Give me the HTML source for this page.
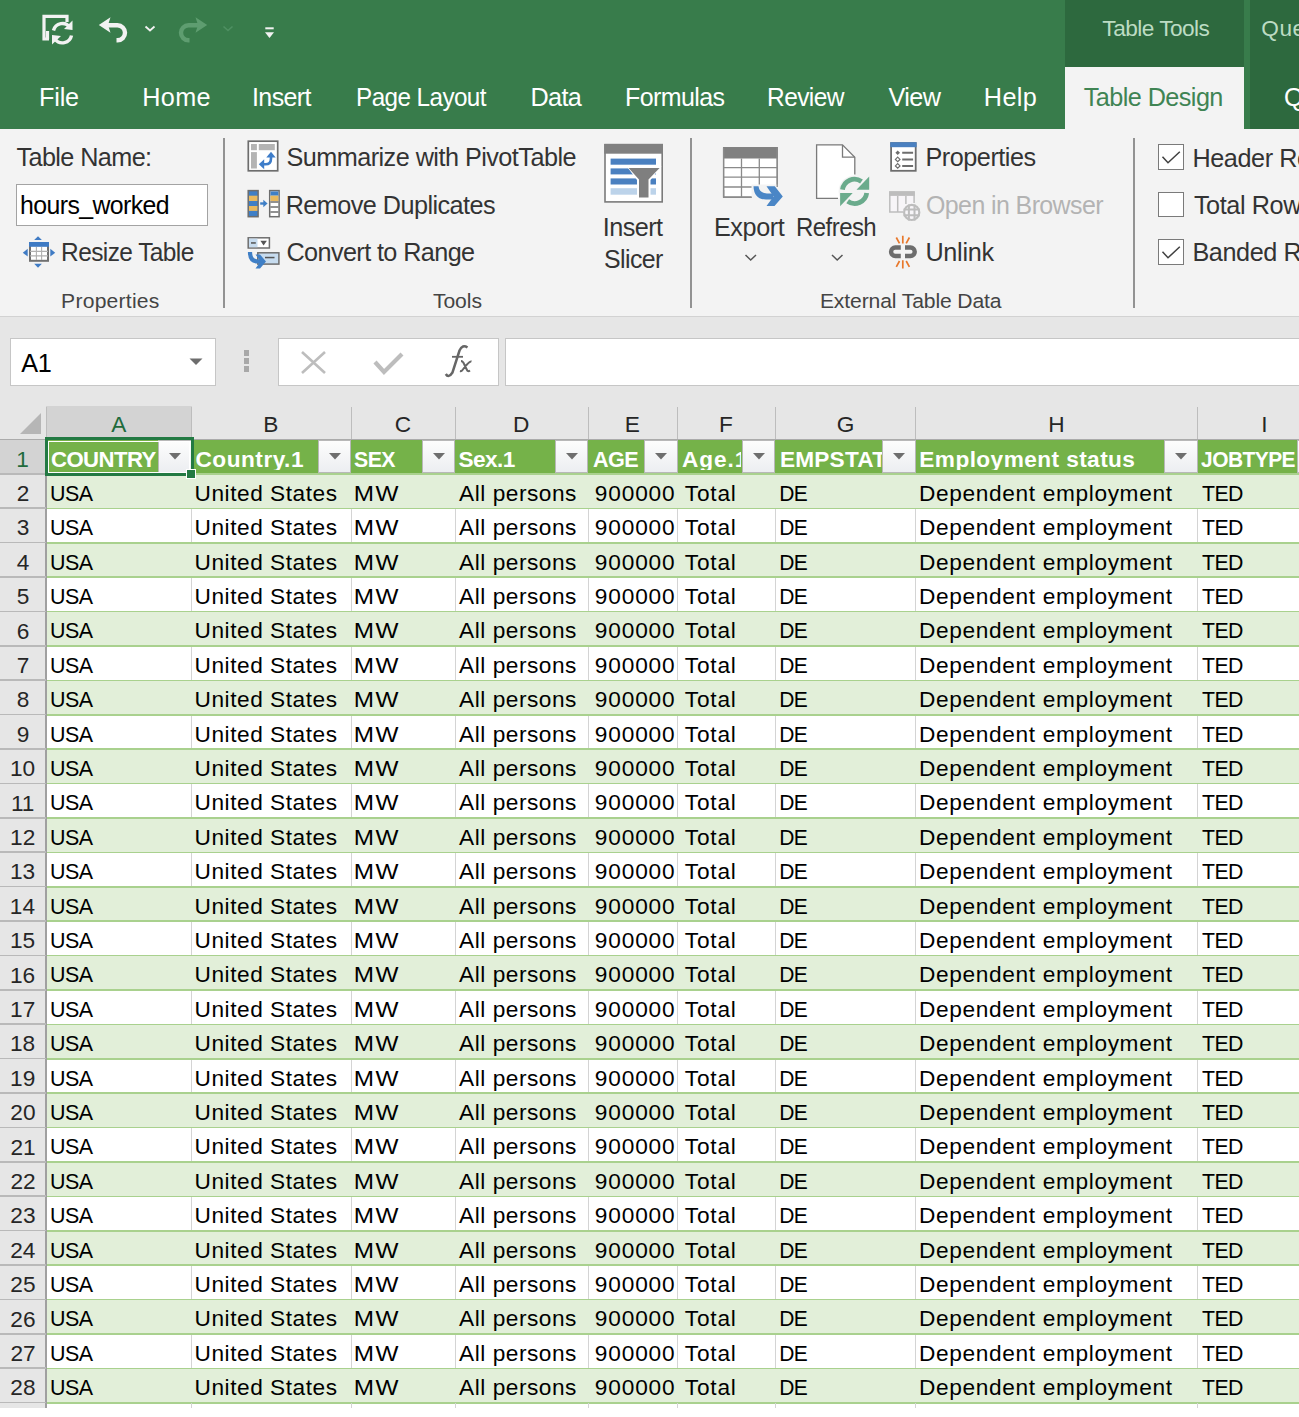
<!DOCTYPE html><html><head><meta charset='utf-8'><style>*{margin:0;padding:0;box-sizing:border-box}
html,body{width:1299px;height:1417px;overflow:hidden;background:#fff;font-family:"Liberation Sans", sans-serif;}
.a{position:absolute}
.t{position:absolute;white-space:nowrap;line-height:1}
</style></head><body>
<div class="a" style="left:0;top:0;width:1299px;height:129px;background:#387c4b"></div>
<div class="a" style="left:1065px;top:0;width:179px;height:67px;background:#2d693e"></div>
<div class="a" style="left:1065px;top:67px;width:179px;height:62px;background:#f3f3f3"></div>
<div class="a" style="left:1250px;top:0;width:49px;height:129px;background:#2d693e"></div>
<div class="t" style="left:39.08px;top:84.83px;font-size:25.23px;color:#ffffff;letter-spacing:-0.198px">File</div>
<div class="t" style="left:142.28px;top:84.83px;font-size:25.23px;color:#ffffff;letter-spacing:0.354px">Home</div>
<div class="t" style="left:252.33px;top:84.83px;font-size:25.23px;color:#ffffff;letter-spacing:-0.600px;transform:scaleX(0.9904);transform-origin:2.27px 0">Insert</div>
<div class="t" style="left:355.78px;top:84.83px;font-size:25.23px;color:#ffffff;letter-spacing:-0.600px;transform:scaleX(0.9616);transform-origin:2.02px 0">Page Layout</div>
<div class="t" style="left:530.38px;top:84.83px;font-size:25.23px;color:#ffffff;letter-spacing:-0.600px">Data</div>
<div class="t" style="left:625.28px;top:84.83px;font-size:25.23px;color:#ffffff;letter-spacing:-0.600px;transform:scaleX(0.9900);transform-origin:2.02px 0">Formulas</div>
<div class="t" style="left:767.28px;top:84.83px;font-size:25.23px;color:#ffffff;letter-spacing:-0.600px;transform:scaleX(0.9712);transform-origin:2.02px 0">Review</div>
<div class="t" style="left:888.55px;top:84.83px;font-size:25.23px;color:#ffffff;letter-spacing:-0.600px">View</div>
<div class="t" style="left:983.78px;top:84.83px;font-size:25.23px;color:#ffffff;letter-spacing:0.418px">Help</div>
<div class="t" style="left:1083.80px;top:84.53px;font-size:25.23px;color:#3f8453;letter-spacing:-0.565px">Table Design</div>
<div class="t" style="left:1102.35px;top:16.93px;font-size:22.66px;color:#bcdcc3;letter-spacing:-0.541px">Table Tools</div>
<div class="t" style="left:1261.17px;top:16.93px;font-size:22.66px;color:#bcdcc3;letter-spacing:0.600px">Que</div>
<div class="t" style="left:1284.04px;top:84.83px;font-size:25.23px;color:#ffffff;letter-spacing:0.000px">Q</div>
<div class="a" style="left:0;top:129px;width:1299px;height:188px;background:#f3f3f3"></div>
<div class="a" style="left:0;top:315.6px;width:1299px;height:1.6px;background:#d2d2d2"></div>
<div class="t" style="left:16.50px;top:145.23px;font-size:25.23px;color:#333333;letter-spacing:-0.600px">Table Name:</div>
<div class="a" style="left:16.3px;top:183.6px;width:192px;height:42px;background:#fff;border:1.5px solid #a3a3a3"></div>
<div class="t" style="left:20.03px;top:192.93px;font-size:25.23px;color:#000000;letter-spacing:-0.600px;transform:scaleX(0.9854);transform-origin:1.77px 0">hours_worked</div>
<div class="t" style="left:60.78px;top:240.43px;font-size:25.23px;color:#333333;letter-spacing:-0.600px;transform:scaleX(0.9703);transform-origin:2.02px 0">Resize Table</div>
<div class="t" style="left:61.11px;top:290.14px;font-size:21.12px;color:#444444;letter-spacing:0.225px">Properties</div>
<div class="a" style="left:223.25px;top:137.5px;width:1.5px;height:170.3px;background:#929292"></div>
<div class="a" style="left:690.25px;top:137.5px;width:1.5px;height:170.3px;background:#929292"></div>
<div class="a" style="left:1133.05px;top:137.5px;width:1.5px;height:170.3px;background:#929292"></div>
<div class="t" style="left:286.44px;top:145.23px;font-size:25.23px;color:#333333;letter-spacing:-0.529px">Summarize with PivotTable</div>
<div class="t" style="left:285.68px;top:192.93px;font-size:25.23px;color:#333333;letter-spacing:-0.545px">Remove Duplicates</div>
<div class="t" style="left:286.44px;top:240.43px;font-size:25.23px;color:#333333;letter-spacing:-0.600px">Convert to Range</div>
<div class="t" style="left:432.88px;top:290.14px;font-size:21.12px;color:#444444;letter-spacing:-0.038px">Tools</div>
<div class="t" style="left:602.73px;top:214.53px;font-size:25.23px;color:#333333;letter-spacing:-0.550px">Insert</div>
<div class="t" style="left:603.74px;top:247.13px;font-size:25.23px;color:#333333;letter-spacing:-0.600px;transform:scaleX(0.9870);transform-origin:1.26px 0">Slicer</div>
<div class="t" style="left:713.88px;top:214.53px;font-size:25.23px;color:#333333;letter-spacing:-0.389px">Export</div>
<div class="t" style="left:795.58px;top:214.53px;font-size:25.23px;color:#333333;letter-spacing:-0.600px;transform:scaleX(0.9511);transform-origin:2.02px 0">Refresh</div>
<div class="t" style="left:925.38px;top:145.23px;font-size:25.23px;color:#333333;letter-spacing:-0.458px">Properties</div>
<div class="t" style="left:926.14px;top:192.93px;font-size:25.23px;color:#b3b3b3;letter-spacing:-0.600px;transform:scaleX(0.9893);transform-origin:1.26px 0">Open in Browser</div>
<div class="t" style="left:925.38px;top:240.43px;font-size:25.23px;color:#333333;letter-spacing:-0.244px">Unlink</div>
<div class="t" style="left:819.91px;top:290.14px;font-size:21.12px;color:#444444;letter-spacing:-0.120px">External Table Data</div>
<div class="a" style="left:1157.5px;top:144.2px;width:26.2px;height:25.5px;background:#fff;border:1.4px solid #7a7a7a"></div>
<div class="a" style="left:1157.5px;top:191.7px;width:26.2px;height:25.5px;background:#fff;border:1.4px solid #7a7a7a"></div>
<div class="a" style="left:1157.5px;top:239.3px;width:26.2px;height:25.5px;background:#fff;border:1.4px solid #7a7a7a"></div>
<svg class="a" style="left:1157.5px;top:144.2px" width="27" height="26"><polyline points="4.5,12.7 10,18.8 21.8,7.8" fill="none" stroke="#404040" stroke-width="1.5"/></svg>
<svg class="a" style="left:1157.5px;top:239.3px" width="27" height="26"><polyline points="4.5,12.7 10,18.8 21.8,7.8" fill="none" stroke="#404040" stroke-width="1.5"/></svg>
<div class="t" style="left:1192.38px;top:145.73px;font-size:25.23px;color:#333333;letter-spacing:-0.400px">Header Ro</div>
<div class="t" style="left:1193.90px;top:192.83px;font-size:25.23px;color:#333333;letter-spacing:-0.400px">Total Row</div>
<div class="t" style="left:1192.38px;top:240.43px;font-size:25.23px;color:#333333;letter-spacing:-0.400px">Banded Ro</div>
<div class="a" style="left:0;top:317.2px;width:1299px;height:90px;background:#e6e6e6"></div>
<div class="a" style="left:10.4px;top:337.6px;width:205.5px;height:48.4px;background:#fff;border:1.2px solid #c6c6c6"></div>
<div class="t" style="left:21.20px;top:350.83px;font-size:25.23px;color:#000000;letter-spacing:-0.171px">A1</div>
<svg class="a" style="left:189px;top:358px" width="15" height="8"><polygon points="0.5,0.5 13.5,0.5 7,7" fill="#6d6d6d"/></svg>
<div class="a" style="left:243.8px;top:350px;width:5.5px;height:5.5px;background:#a8a8a8"></div>
<div class="a" style="left:243.8px;top:358px;width:5.5px;height:5.5px;background:#a8a8a8"></div>
<div class="a" style="left:243.8px;top:366px;width:5.5px;height:5.5px;background:#a8a8a8"></div>
<div class="a" style="left:277.6px;top:337.5px;width:221.7px;height:48.5px;background:#fff;border:1.2px solid #c6c6c6"></div>
<div class="a" style="left:504.9px;top:337.5px;width:800px;height:48.5px;background:#fff;border:1.2px solid #c6c6c6"></div>
<svg class="a" style="left:298px;top:349px" width="32" height="27"><path d="M4,3 L27,24 M27,3 L4,24" stroke="#bdbdbd" stroke-width="2.6" fill="none"/></svg>
<svg class="a" style="left:372px;top:350px" width="34" height="27"><polyline points="3,12 12,22 30,4" stroke="#bdbdbd" stroke-width="4.2" fill="none"/></svg>
<svg class="a" style="left:0;top:0" width="600" height="400"><path d="M445.8,374 Q448.5,378.5 452.5,372.5 L459.5,350.5 Q462.5,344 467.5,347.5" stroke="#666" stroke-width="2.5" fill="none"/><path d="M452,356.8 H463" stroke="#666" stroke-width="1.8"/><path d="M461,361 Q463,361 464.5,365 L467,370 Q468,372 470,370.5 M471.5,361.5 Q470,361 466.5,365 L462.5,370 Q461.5,371.5 460,371" stroke="#666" stroke-width="2" fill="none"/></svg>

<svg class="a" style="left:0;top:0" width="1299" height="400" viewBox="0 0 1299 400">
 <!-- QAT: autosave/refresh doc -->
 <g fill="none" stroke="#f2f2f2" stroke-width="3.2">
  <path d="M49,39 H44 V16.3 H67 V22"/>
  <path d="M47.5,31 V39"/>
 </g>
 <g fill="none" stroke="#f2f2f2" stroke-width="3.4">
  <path d="M53.5,30.5 A9.2,9.2 0 0 1 70,27.5"/>
  <path d="M71.5,35.5 A9.2,9.2 0 0 1 55,39"/>
 </g>
 <polygon points="72.5,20.5 72.5,30 64,29" fill="#f2f2f2"/>
 <polygon points="52,44.5 52,35 61,36" fill="#f2f2f2"/>
 <!-- undo -->
 <path d="M106,25.3 H117.5 A7.5,7.5 0 0 1 117.5,40.3 H116.5" fill="none" stroke="#f2f2f2" stroke-width="4.4"/>
 <polygon points="98.8,25 110.5,17.3 108,25 110.5,32.7" fill="#f2f2f2"/>
 <polyline points="145.5,26.5 150,30.5 154.5,26.5" fill="none" stroke="#f2f2f2" stroke-width="1.8"/>
 <!-- redo disabled -->
 <path d="M200,25.3 H188.5 A7.5,7.5 0 0 0 188.5,40.3 H189.5" fill="none" stroke="#5e9d70" stroke-width="4.4"/>
 <polygon points="207.2,25 195.5,17.3 198,25 195.5,32.7" fill="#5e9d70"/>
 <polyline points="223.5,26.5 228,30.5 232.5,26.5" fill="none" stroke="#4f9062" stroke-width="1.6"/>
 <!-- customize -->
 <rect x="265.3" y="27.3" width="8.4" height="2" fill="#f2f2f2"/>
 <polygon points="265,32.3 274,32.3 269.5,38" fill="#f2f2f2"/>

 <!-- Resize table icon -->
 <rect x="30" y="243" width="18" height="17.8" fill="#fff" stroke="#707070" stroke-width="2"/>
 <rect x="29" y="242" width="20" height="4.8" fill="#3f7bc4"/>
 <path d="M36.4,247 V260 M41.6,247 V260 M30,251.4 H48 M30,255.9 H48" stroke="#b0b0b0" stroke-width="1.1"/>
 <polygon points="34.2,240 41.9,240 38,236.3" fill="#3f7bc4"/>
 <polygon points="34.2,263.8 41.9,263.8 38,267.8" fill="#3f7bc4"/>
 <polygon points="27.7,248.8 27.7,256.6 22.8,252.7" fill="#3f7bc4"/>
 <polygon points="50.3,248.8 50.3,256.6 55.2,252.7" fill="#3f7bc4"/>

 <!-- Summarize with PivotTable icon -->
 <rect x="248.3" y="141.2" width="29.4" height="29.6" fill="#fff" stroke="#6d6d6d" stroke-width="1.7"/>
 <rect x="251" y="144" width="5.9" height="6.2" fill="#b4b4b4"/>
 <rect x="258.8" y="144" width="16" height="6.2" fill="#b4b4b4"/>
 <rect x="251" y="152.1" width="5.9" height="16.4" fill="#b4b4b4"/>
 <path d="M262,164.3 H265.5 Q271,164.3 271,158.5 V156" fill="none" stroke="#3d7cc9" stroke-width="2.6"/>
 <polygon points="258.8,164.3 264.2,159.3 264.2,169.3" fill="#3d7cc9"/>
 <polygon points="271,151.8 266.3,157.5 275.7,157.5" fill="#3d7cc9"/>

 <!-- Remove duplicates icon -->
 <rect x="248.2" y="190.6" width="9.9" height="26.1" fill="#3f7fc6" stroke="#6d6d6d" stroke-width="1.5"/>
 <rect x="249" y="195.7" width="8.4" height="5.3" fill="#e9b95e"/>
 <rect x="249" y="206" width="8.4" height="4.9" fill="#e9b95e"/>
 <rect x="269.7" y="190.6" width="9.4" height="26.1" fill="#fff" stroke="#6d6d6d" stroke-width="1.5"/>
 <rect x="270.5" y="191.4" width="7.8" height="4.3" fill="#3f7fc6"/>
 <rect x="270.5" y="195.7" width="7.8" height="5.3" fill="#e9b95e"/>
 <path d="M270.4,202 H278.4 M270.4,207 H278.4 M270.4,212 H278.4" stroke="#6d6d6d" stroke-width="1.7"/>
 <rect x="260.2" y="202.3" width="4" height="2.4" fill="#3f7fc6"/>
 <polygon points="263.3,199.8 267.6,203.5 263.3,207.2" fill="#3f7fc6"/>

 <!-- Convert to range icon -->
 <rect x="248.2" y="237.8" width="21.2" height="10.2" fill="#fff" stroke="#6d6d6d" stroke-width="1.5"/>
 <rect x="249" y="238.6" width="8.5" height="8.6" fill="#c7dcef"/>
 <rect x="251" y="242.2" width="4.8" height="1.5" fill="#555"/>
 <polygon points="260.4,240.8 266.9,240.8 263.6,245.4" fill="#555"/>
 <rect x="257.8" y="252.8" width="21.1" height="11.3" fill="#c7dcef" stroke="#6d6d6d" stroke-width="1.5"/>
 <rect x="265" y="256.8" width="9.5" height="1.5" fill="#555"/>
 <path d="M250,252 Q250,261.5 258,261.5 H261" fill="none" stroke="#3f7fc6" stroke-width="4.2"/>
 <polygon points="255.5,254.5 260,254.5 266,261.5 260,268.5 255.5,268.5 260.5,261.5" fill="#3f7fc6"/>

 <!-- Insert slicer icon -->
 <rect x="605" y="144.7" width="57.2" height="57.2" fill="#fff" stroke="#7a7a7a" stroke-width="1.6"/>
 <rect x="604.2" y="143.9" width="58.8" height="9.8" fill="#808080"/>
 <rect x="610.6" y="158.6" width="45.4" height="6.1" fill="#4a80c0"/>
 <rect x="610.6" y="168.4" width="45.4" height="6" fill="#4a80c0"/>
 <rect x="610.6" y="178.4" width="45.4" height="6.1" fill="#4a80c0"/>
 <rect x="610.6" y="188.2" width="45.4" height="6.5" fill="#bcd3ea"/>
 <polygon points="626.5,166 661.5,166 650.5,180 650.5,199.5 637,199.5 637,180" fill="#fff"/>
 <polygon points="628.6,167.9 659.6,167.9 648.5,179.5 648.5,197.5 639,197.5 639,179.5" fill="#7f7f7f"/>

 <!-- Export icon -->
 <rect x="723.6" y="147.7" width="53.6" height="49.3" fill="#fff" stroke="#8a8a8a" stroke-width="1.3"/>
 <rect x="723" y="147.1" width="54.8" height="11.4" fill="#808080"/>
 <path d="M741.5,158.5 V197 M759.3,158.5 V197 M723.5,167.7 H777.3 M723.5,177.2 H777.3 M723.5,187 H777.3" stroke="#8a8a8a" stroke-width="1.3"/>
 <polygon points="751.5,184.5 780,184.5 785,198 776.5,208 751.5,208" fill="#f3f3f3"/>
 <path d="M751.5,197.4 H724 M723.6,197 V190" stroke="#8a8a8a" stroke-width="1.3"/>
 <path d="M723.6,147.7 V197.4 H751.5" fill="none" stroke="#8a8a8a" stroke-width="1.3"/>
 <path d="M777.2,147.7 V187" fill="none" stroke="#8a8a8a" stroke-width="1.3"/>
 <polygon points="753.5,186.3 758.5,186.3 Q759.5,193.4 767,193.4 L773,193.4 L773,199.5 L766,199.5 Q754,199.5 753.5,186.3 Z" fill="#4a86c6"/>
 <path d="M753.5,186.3 L758.5,186.3 Q759.5,193.4 767,193.4 L773,193.4 L773,199.5 L766,199.5 Q754,199.5 753.5,186.3 Z" fill="#4a86c6"/>
 <polygon points="766.5,186.3 774.8,186.3 782.8,196.5 774.5,205.9 766.5,205.9 773.5,196.5" fill="#4a86c6"/>

 <!-- Refresh icon -->
 <polygon points="816.6,144.9 842.5,144.9 854.8,157.2 854.8,198.3 816.6,198.3" fill="#fff"/>
 <path d="M838,198.3 H816.6 V144.9 H842.5 L854.8,157.2 V174.5" fill="none" stroke="#7a7a7a" stroke-width="1.3"/>
 <path d="M842.5,144.9 V157.2 H854.8" fill="none" stroke="#7a7a7a" stroke-width="1.3"/>
 <rect x="838" y="175" width="40" height="40" fill="#f3f3f3"/>
 <polygon points="838,175 854.8,175 854.8,198.3 838,198.3" fill="#fff"/>
 <circle cx="854.6" cy="191.4" r="16" fill="#f3f3f3"/>
 <g fill="none" stroke="#6aab8c" stroke-width="4.8">
  <path d="M842.5,189.7 A12.1,12.1 0 0 1 861.5,181.5"/>
  <path d="M866.7,193 A12.1,12.1 0 0 1 847.7,201.3"/>
 </g>
 <polygon points="869.2,176.5 869.2,189.7 856.5,189.7" fill="#6aab8c"/>
 <polygon points="840.1,206.3 840.1,193 852.7,193" fill="#6aab8c"/>
 <polyline points="745.5,255 750.7,260 756,255" fill="none" stroke="#555" stroke-width="1.5"/>
 <polyline points="832,255 837.2,260 842.5,255" fill="none" stroke="#555" stroke-width="1.5"/>

 <!-- Properties icon -->
 <rect x="891.1" y="143.1" width="24.6" height="27.7" fill="#fff" stroke="#6d6d6d" stroke-width="1.8"/>
 <rect x="890.2" y="142.2" width="26.4" height="5" fill="#4a80c0"/>
 <polygon points="897.7,150.5 900,152.8 897.7,155.1 895.4,152.8" fill="#6d6d6d"/>
 <polygon points="897.7,157.1 900,159.4 897.7,161.7 895.4,159.4" fill="none" stroke="#6d6d6d" stroke-width="1.2"/>
 <polygon points="897.7,163.6 900,165.9 897.7,168.2 895.4,165.9" fill="none" stroke="#6d6d6d" stroke-width="1.2"/>
 <path d="M902.2,152.8 H913.1 M902.2,159.4 H913.1 M902.2,165.9 H913.1" stroke="#6d6d6d" stroke-width="2"/>

 <!-- Open in browser (disabled) -->
 <path d="M903,212 H889.8 V192.1 H914.1 V203" fill="#f7f5f8" stroke="#bdbdbd" stroke-width="1.5"/>
 <rect x="889.1" y="191.4" width="25.7" height="4.5" fill="#bdbdbd"/>
 <path d="M897.7,195.9 V212 M905.9,195.9 V204" stroke="#bdbdbd" stroke-width="1.5"/>
 <circle cx="911.7" cy="212.4" r="7.6" fill="#f7f5f8" stroke="#bdbdbd" stroke-width="2.2"/>
 <path d="M908.9,204.5 V220.5 M914.5,204.5 V220.5 M903.6,209.6 H919.8 M903.6,215.2 H919.8" stroke="#bdbdbd" stroke-width="2"/>

 <!-- Unlink -->
 <path d="M900.8,247.5 H895.3 A4.25,4.25 0 0 0 895.3,256 H900.8" fill="none" stroke="#6d6d6d" stroke-width="4.4"/>
 <path d="M905,247.5 H910.5 A4.25,4.25 0 0 1 910.5,256 H905" fill="none" stroke="#6d6d6d" stroke-width="4.4"/>
 <path d="M902.8,235.8 V243.6 M896.3,237.5 L899.5,243.3 M909.4,237.5 L906.2,243.3 M902.8,260.3 V268.6 M896.3,266.8 L899.5,261 M909.4,266.8 L906.2,261" stroke="#e8782b" stroke-width="1.7"/>
</svg>

<div class="a" style="left:0;top:406px;width:1299px;height:33.60000000000002px;background:#e6e6e6"></div>
<div class="a" style="left:46px;top:406px;width:145.5px;height:33.60000000000002px;background:#d3d3d3"></div>
<svg class="a" style="left:0;top:406px" width="46" height="34"><polygon points="41,7 41,28 20,28" fill="#b6b6b6"/></svg>
<div class="a" style="left:45.5px;top:407px;width:1px;height:32.60000000000002px;background:#bdbdbd"></div>
<div class="a" style="left:191.0px;top:407px;width:1px;height:32.60000000000002px;background:#bdbdbd"></div>
<div class="a" style="left:350.5px;top:407px;width:1px;height:32.60000000000002px;background:#bdbdbd"></div>
<div class="a" style="left:454.5px;top:407px;width:1px;height:32.60000000000002px;background:#bdbdbd"></div>
<div class="a" style="left:587.5px;top:407px;width:1px;height:32.60000000000002px;background:#bdbdbd"></div>
<div class="a" style="left:677.0px;top:407px;width:1px;height:32.60000000000002px;background:#bdbdbd"></div>
<div class="a" style="left:774.5px;top:407px;width:1px;height:32.60000000000002px;background:#bdbdbd"></div>
<div class="a" style="left:915.0px;top:407px;width:1px;height:32.60000000000002px;background:#bdbdbd"></div>
<div class="a" style="left:1197.0px;top:407px;width:1px;height:32.60000000000002px;background:#bdbdbd"></div>
<div class="t" style="left:111.27px;top:412.93px;font-size:22.66px;color:#1f6b3c;letter-spacing:0.000px">A</div>
<div class="t" style="left:263.32px;top:412.93px;font-size:22.66px;color:#262626;letter-spacing:0.000px">B</div>
<div class="t" style="left:394.73px;top:412.93px;font-size:22.66px;color:#262626;letter-spacing:0.000px">C</div>
<div class="t" style="left:512.89px;top:412.93px;font-size:22.66px;color:#262626;letter-spacing:0.000px">D</div>
<div class="t" style="left:624.71px;top:412.93px;font-size:22.66px;color:#262626;letter-spacing:0.000px">E</div>
<div class="t" style="left:718.89px;top:412.93px;font-size:22.66px;color:#262626;letter-spacing:0.000px">F</div>
<div class="t" style="left:836.75px;top:412.93px;font-size:22.66px;color:#262626;letter-spacing:0.000px">G</div>
<div class="t" style="left:1048.34px;top:412.93px;font-size:22.66px;color:#262626;letter-spacing:0.000px">H</div>
<div class="t" style="left:1261.33px;top:412.93px;font-size:22.66px;color:#262626;letter-spacing:0.000px">I</div>
<div class="a" style="left:0;top:438.6px;width:1299px;height:1px;background:#ababab"></div>
<div class="a" style="left:0;top:439.6px;width:46px;height:968.9px;background:#e6e6e6"></div>
<div class="a" style="left:0;top:439.6px;width:46px;height:34.4px;background:#d3d3d3"></div>
<div class="a" style="left:45.3px;top:439.6px;width:1.4px;height:968.9px;background:#a0a0a0"></div>
<div class="a" style="left:0;top:473.0px;width:46px;height:1.5px;background:#b9b9b9"></div>
<div class="t" style="left:16.32px;top:447.63px;font-size:22.66px;color:#1f6b3c;letter-spacing:0.000px">1</div>
<div class="a" style="left:0;top:507.4px;width:46px;height:1.5px;background:#b9b9b9"></div>
<div class="t" style="left:16.66px;top:482.03px;font-size:22.66px;color:#262626;letter-spacing:0.000px">2</div>
<div class="a" style="left:0;top:541.8000000000001px;width:46px;height:1.5px;background:#b9b9b9"></div>
<div class="t" style="left:16.77px;top:516.43px;font-size:22.66px;color:#262626;letter-spacing:0.000px">3</div>
<div class="a" style="left:0;top:576.1999999999999px;width:46px;height:1.5px;background:#b9b9b9"></div>
<div class="t" style="left:16.77px;top:550.83px;font-size:22.66px;color:#262626;letter-spacing:0.000px">4</div>
<div class="a" style="left:0;top:610.6px;width:46px;height:1.5px;background:#b9b9b9"></div>
<div class="t" style="left:16.66px;top:585.23px;font-size:22.66px;color:#262626;letter-spacing:0.000px">5</div>
<div class="a" style="left:0;top:645.0px;width:46px;height:1.5px;background:#b9b9b9"></div>
<div class="t" style="left:16.66px;top:619.63px;font-size:22.66px;color:#262626;letter-spacing:0.000px">6</div>
<div class="a" style="left:0;top:679.4px;width:46px;height:1.5px;background:#b9b9b9"></div>
<div class="t" style="left:16.66px;top:654.03px;font-size:22.66px;color:#262626;letter-spacing:0.000px">7</div>
<div class="a" style="left:0;top:713.8px;width:46px;height:1.5px;background:#b9b9b9"></div>
<div class="t" style="left:16.77px;top:688.43px;font-size:22.66px;color:#262626;letter-spacing:0.000px">8</div>
<div class="a" style="left:0;top:748.1999999999999px;width:46px;height:1.5px;background:#b9b9b9"></div>
<div class="t" style="left:16.66px;top:722.83px;font-size:22.66px;color:#262626;letter-spacing:0.000px">9</div>
<div class="a" style="left:0;top:782.6px;width:46px;height:1.5px;background:#b9b9b9"></div>
<div class="t" style="left:9.97px;top:757.23px;font-size:22.66px;color:#262626;letter-spacing:0.000px">10</div>
<div class="a" style="left:0;top:817.0px;width:46px;height:1.5px;background:#b9b9b9"></div>
<div class="t" style="left:10.88px;top:791.63px;font-size:22.66px;color:#262626;letter-spacing:0.000px">11</div>
<div class="a" style="left:0;top:851.4px;width:46px;height:1.5px;background:#b9b9b9"></div>
<div class="t" style="left:10.08px;top:826.03px;font-size:22.66px;color:#262626;letter-spacing:0.000px">12</div>
<div class="a" style="left:0;top:885.8px;width:46px;height:1.5px;background:#b9b9b9"></div>
<div class="t" style="left:9.97px;top:860.43px;font-size:22.66px;color:#262626;letter-spacing:0.000px">13</div>
<div class="a" style="left:0;top:920.1999999999999px;width:46px;height:1.5px;background:#b9b9b9"></div>
<div class="t" style="left:9.86px;top:894.83px;font-size:22.66px;color:#262626;letter-spacing:0.000px">14</div>
<div class="a" style="left:0;top:954.6px;width:46px;height:1.5px;background:#b9b9b9"></div>
<div class="t" style="left:9.97px;top:929.23px;font-size:22.66px;color:#262626;letter-spacing:0.000px">15</div>
<div class="a" style="left:0;top:989.0px;width:46px;height:1.5px;background:#b9b9b9"></div>
<div class="t" style="left:9.97px;top:963.63px;font-size:22.66px;color:#262626;letter-spacing:0.000px">16</div>
<div class="a" style="left:0;top:1023.4000000000001px;width:46px;height:1.5px;background:#b9b9b9"></div>
<div class="t" style="left:10.08px;top:998.03px;font-size:22.66px;color:#262626;letter-spacing:0.000px">17</div>
<div class="a" style="left:0;top:1057.8000000000002px;width:46px;height:1.5px;background:#b9b9b9"></div>
<div class="t" style="left:9.97px;top:1032.43px;font-size:22.66px;color:#262626;letter-spacing:0.000px">18</div>
<div class="a" style="left:0;top:1092.2px;width:46px;height:1.5px;background:#b9b9b9"></div>
<div class="t" style="left:10.08px;top:1066.83px;font-size:22.66px;color:#262626;letter-spacing:0.000px">19</div>
<div class="a" style="left:0;top:1126.6000000000001px;width:46px;height:1.5px;background:#b9b9b9"></div>
<div class="t" style="left:10.31px;top:1101.23px;font-size:22.66px;color:#262626;letter-spacing:0.000px">20</div>
<div class="a" style="left:0;top:1161.0px;width:46px;height:1.5px;background:#b9b9b9"></div>
<div class="t" style="left:10.42px;top:1135.63px;font-size:22.66px;color:#262626;letter-spacing:0.000px">21</div>
<div class="a" style="left:0;top:1195.4px;width:46px;height:1.5px;background:#b9b9b9"></div>
<div class="t" style="left:10.42px;top:1170.03px;font-size:22.66px;color:#262626;letter-spacing:0.000px">22</div>
<div class="a" style="left:0;top:1229.8000000000002px;width:46px;height:1.5px;background:#b9b9b9"></div>
<div class="t" style="left:10.31px;top:1204.43px;font-size:22.66px;color:#262626;letter-spacing:0.000px">23</div>
<div class="a" style="left:0;top:1264.2px;width:46px;height:1.5px;background:#b9b9b9"></div>
<div class="t" style="left:10.20px;top:1238.83px;font-size:22.66px;color:#262626;letter-spacing:0.000px">24</div>
<div class="a" style="left:0;top:1298.6px;width:46px;height:1.5px;background:#b9b9b9"></div>
<div class="t" style="left:10.31px;top:1273.23px;font-size:22.66px;color:#262626;letter-spacing:0.000px">25</div>
<div class="a" style="left:0;top:1333.0px;width:46px;height:1.5px;background:#b9b9b9"></div>
<div class="t" style="left:10.31px;top:1307.63px;font-size:22.66px;color:#262626;letter-spacing:0.000px">26</div>
<div class="a" style="left:0;top:1367.4px;width:46px;height:1.5px;background:#b9b9b9"></div>
<div class="t" style="left:10.42px;top:1342.03px;font-size:22.66px;color:#262626;letter-spacing:0.000px">27</div>
<div class="a" style="left:0;top:1401.8000000000002px;width:46px;height:1.5px;background:#b9b9b9"></div>
<div class="t" style="left:10.31px;top:1376.43px;font-size:22.66px;color:#262626;letter-spacing:0.000px">28</div>
<div class="a" style="left:46.5px;top:439.6px;width:1252.5px;height:34.4px;background:#75b249"></div>
<div class="a" style="left:46.5px;top:474.0px;width:1252.5px;height:34.4px;background:#e2efd9"></div>
<div class="a" style="left:46.5px;top:473.25px;width:1252.5px;height:1.5px;background:#a9d18e"></div>
<div class="a" style="left:46.5px;top:508.40000000000003px;width:1252.5px;height:34.4px;background:#ffffff"></div>
<div class="a" style="left:191.0px;top:508.40000000000003px;width:1px;height:34.4px;background:#d4d4d4"></div>
<div class="a" style="left:350.5px;top:508.40000000000003px;width:1px;height:34.4px;background:#d4d4d4"></div>
<div class="a" style="left:454.5px;top:508.40000000000003px;width:1px;height:34.4px;background:#d4d4d4"></div>
<div class="a" style="left:587.5px;top:508.40000000000003px;width:1px;height:34.4px;background:#d4d4d4"></div>
<div class="a" style="left:677.0px;top:508.40000000000003px;width:1px;height:34.4px;background:#d4d4d4"></div>
<div class="a" style="left:774.5px;top:508.40000000000003px;width:1px;height:34.4px;background:#d4d4d4"></div>
<div class="a" style="left:915.0px;top:508.40000000000003px;width:1px;height:34.4px;background:#d4d4d4"></div>
<div class="a" style="left:1197.0px;top:508.40000000000003px;width:1px;height:34.4px;background:#d4d4d4"></div>
<div class="a" style="left:46.5px;top:507.65000000000003px;width:1252.5px;height:1.5px;background:#a9d18e"></div>
<div class="a" style="left:46.5px;top:542.8px;width:1252.5px;height:34.4px;background:#e2efd9"></div>
<div class="a" style="left:46.5px;top:542.05px;width:1252.5px;height:1.5px;background:#a9d18e"></div>
<div class="a" style="left:46.5px;top:577.2px;width:1252.5px;height:34.4px;background:#ffffff"></div>
<div class="a" style="left:191.0px;top:577.2px;width:1px;height:34.4px;background:#d4d4d4"></div>
<div class="a" style="left:350.5px;top:577.2px;width:1px;height:34.4px;background:#d4d4d4"></div>
<div class="a" style="left:454.5px;top:577.2px;width:1px;height:34.4px;background:#d4d4d4"></div>
<div class="a" style="left:587.5px;top:577.2px;width:1px;height:34.4px;background:#d4d4d4"></div>
<div class="a" style="left:677.0px;top:577.2px;width:1px;height:34.4px;background:#d4d4d4"></div>
<div class="a" style="left:774.5px;top:577.2px;width:1px;height:34.4px;background:#d4d4d4"></div>
<div class="a" style="left:915.0px;top:577.2px;width:1px;height:34.4px;background:#d4d4d4"></div>
<div class="a" style="left:1197.0px;top:577.2px;width:1px;height:34.4px;background:#d4d4d4"></div>
<div class="a" style="left:46.5px;top:576.45px;width:1252.5px;height:1.5px;background:#a9d18e"></div>
<div class="a" style="left:46.5px;top:611.6px;width:1252.5px;height:34.4px;background:#e2efd9"></div>
<div class="a" style="left:46.5px;top:610.85px;width:1252.5px;height:1.5px;background:#a9d18e"></div>
<div class="a" style="left:46.5px;top:646.0px;width:1252.5px;height:34.4px;background:#ffffff"></div>
<div class="a" style="left:191.0px;top:646.0px;width:1px;height:34.4px;background:#d4d4d4"></div>
<div class="a" style="left:350.5px;top:646.0px;width:1px;height:34.4px;background:#d4d4d4"></div>
<div class="a" style="left:454.5px;top:646.0px;width:1px;height:34.4px;background:#d4d4d4"></div>
<div class="a" style="left:587.5px;top:646.0px;width:1px;height:34.4px;background:#d4d4d4"></div>
<div class="a" style="left:677.0px;top:646.0px;width:1px;height:34.4px;background:#d4d4d4"></div>
<div class="a" style="left:774.5px;top:646.0px;width:1px;height:34.4px;background:#d4d4d4"></div>
<div class="a" style="left:915.0px;top:646.0px;width:1px;height:34.4px;background:#d4d4d4"></div>
<div class="a" style="left:1197.0px;top:646.0px;width:1px;height:34.4px;background:#d4d4d4"></div>
<div class="a" style="left:46.5px;top:645.25px;width:1252.5px;height:1.5px;background:#a9d18e"></div>
<div class="a" style="left:46.5px;top:680.4px;width:1252.5px;height:34.4px;background:#e2efd9"></div>
<div class="a" style="left:46.5px;top:679.65px;width:1252.5px;height:1.5px;background:#a9d18e"></div>
<div class="a" style="left:46.5px;top:714.8px;width:1252.5px;height:34.4px;background:#ffffff"></div>
<div class="a" style="left:191.0px;top:714.8px;width:1px;height:34.4px;background:#d4d4d4"></div>
<div class="a" style="left:350.5px;top:714.8px;width:1px;height:34.4px;background:#d4d4d4"></div>
<div class="a" style="left:454.5px;top:714.8px;width:1px;height:34.4px;background:#d4d4d4"></div>
<div class="a" style="left:587.5px;top:714.8px;width:1px;height:34.4px;background:#d4d4d4"></div>
<div class="a" style="left:677.0px;top:714.8px;width:1px;height:34.4px;background:#d4d4d4"></div>
<div class="a" style="left:774.5px;top:714.8px;width:1px;height:34.4px;background:#d4d4d4"></div>
<div class="a" style="left:915.0px;top:714.8px;width:1px;height:34.4px;background:#d4d4d4"></div>
<div class="a" style="left:1197.0px;top:714.8px;width:1px;height:34.4px;background:#d4d4d4"></div>
<div class="a" style="left:46.5px;top:714.05px;width:1252.5px;height:1.5px;background:#a9d18e"></div>
<div class="a" style="left:46.5px;top:749.2px;width:1252.5px;height:34.4px;background:#e2efd9"></div>
<div class="a" style="left:46.5px;top:748.45px;width:1252.5px;height:1.5px;background:#a9d18e"></div>
<div class="a" style="left:46.5px;top:783.6px;width:1252.5px;height:34.4px;background:#ffffff"></div>
<div class="a" style="left:191.0px;top:783.6px;width:1px;height:34.4px;background:#d4d4d4"></div>
<div class="a" style="left:350.5px;top:783.6px;width:1px;height:34.4px;background:#d4d4d4"></div>
<div class="a" style="left:454.5px;top:783.6px;width:1px;height:34.4px;background:#d4d4d4"></div>
<div class="a" style="left:587.5px;top:783.6px;width:1px;height:34.4px;background:#d4d4d4"></div>
<div class="a" style="left:677.0px;top:783.6px;width:1px;height:34.4px;background:#d4d4d4"></div>
<div class="a" style="left:774.5px;top:783.6px;width:1px;height:34.4px;background:#d4d4d4"></div>
<div class="a" style="left:915.0px;top:783.6px;width:1px;height:34.4px;background:#d4d4d4"></div>
<div class="a" style="left:1197.0px;top:783.6px;width:1px;height:34.4px;background:#d4d4d4"></div>
<div class="a" style="left:46.5px;top:782.85px;width:1252.5px;height:1.5px;background:#a9d18e"></div>
<div class="a" style="left:46.5px;top:818.0px;width:1252.5px;height:34.4px;background:#e2efd9"></div>
<div class="a" style="left:46.5px;top:817.25px;width:1252.5px;height:1.5px;background:#a9d18e"></div>
<div class="a" style="left:46.5px;top:852.4px;width:1252.5px;height:34.4px;background:#ffffff"></div>
<div class="a" style="left:191.0px;top:852.4px;width:1px;height:34.4px;background:#d4d4d4"></div>
<div class="a" style="left:350.5px;top:852.4px;width:1px;height:34.4px;background:#d4d4d4"></div>
<div class="a" style="left:454.5px;top:852.4px;width:1px;height:34.4px;background:#d4d4d4"></div>
<div class="a" style="left:587.5px;top:852.4px;width:1px;height:34.4px;background:#d4d4d4"></div>
<div class="a" style="left:677.0px;top:852.4px;width:1px;height:34.4px;background:#d4d4d4"></div>
<div class="a" style="left:774.5px;top:852.4px;width:1px;height:34.4px;background:#d4d4d4"></div>
<div class="a" style="left:915.0px;top:852.4px;width:1px;height:34.4px;background:#d4d4d4"></div>
<div class="a" style="left:1197.0px;top:852.4px;width:1px;height:34.4px;background:#d4d4d4"></div>
<div class="a" style="left:46.5px;top:851.65px;width:1252.5px;height:1.5px;background:#a9d18e"></div>
<div class="a" style="left:46.5px;top:886.8px;width:1252.5px;height:34.4px;background:#e2efd9"></div>
<div class="a" style="left:46.5px;top:886.05px;width:1252.5px;height:1.5px;background:#a9d18e"></div>
<div class="a" style="left:46.5px;top:921.2px;width:1252.5px;height:34.4px;background:#ffffff"></div>
<div class="a" style="left:191.0px;top:921.2px;width:1px;height:34.4px;background:#d4d4d4"></div>
<div class="a" style="left:350.5px;top:921.2px;width:1px;height:34.4px;background:#d4d4d4"></div>
<div class="a" style="left:454.5px;top:921.2px;width:1px;height:34.4px;background:#d4d4d4"></div>
<div class="a" style="left:587.5px;top:921.2px;width:1px;height:34.4px;background:#d4d4d4"></div>
<div class="a" style="left:677.0px;top:921.2px;width:1px;height:34.4px;background:#d4d4d4"></div>
<div class="a" style="left:774.5px;top:921.2px;width:1px;height:34.4px;background:#d4d4d4"></div>
<div class="a" style="left:915.0px;top:921.2px;width:1px;height:34.4px;background:#d4d4d4"></div>
<div class="a" style="left:1197.0px;top:921.2px;width:1px;height:34.4px;background:#d4d4d4"></div>
<div class="a" style="left:46.5px;top:920.45px;width:1252.5px;height:1.5px;background:#a9d18e"></div>
<div class="a" style="left:46.5px;top:955.6px;width:1252.5px;height:34.4px;background:#e2efd9"></div>
<div class="a" style="left:46.5px;top:954.85px;width:1252.5px;height:1.5px;background:#a9d18e"></div>
<div class="a" style="left:46.5px;top:990.0px;width:1252.5px;height:34.4px;background:#ffffff"></div>
<div class="a" style="left:191.0px;top:990.0px;width:1px;height:34.4px;background:#d4d4d4"></div>
<div class="a" style="left:350.5px;top:990.0px;width:1px;height:34.4px;background:#d4d4d4"></div>
<div class="a" style="left:454.5px;top:990.0px;width:1px;height:34.4px;background:#d4d4d4"></div>
<div class="a" style="left:587.5px;top:990.0px;width:1px;height:34.4px;background:#d4d4d4"></div>
<div class="a" style="left:677.0px;top:990.0px;width:1px;height:34.4px;background:#d4d4d4"></div>
<div class="a" style="left:774.5px;top:990.0px;width:1px;height:34.4px;background:#d4d4d4"></div>
<div class="a" style="left:915.0px;top:990.0px;width:1px;height:34.4px;background:#d4d4d4"></div>
<div class="a" style="left:1197.0px;top:990.0px;width:1px;height:34.4px;background:#d4d4d4"></div>
<div class="a" style="left:46.5px;top:989.25px;width:1252.5px;height:1.5px;background:#a9d18e"></div>
<div class="a" style="left:46.5px;top:1024.4px;width:1252.5px;height:34.4px;background:#e2efd9"></div>
<div class="a" style="left:46.5px;top:1023.6500000000001px;width:1252.5px;height:1.5px;background:#a9d18e"></div>
<div class="a" style="left:46.5px;top:1058.8px;width:1252.5px;height:34.4px;background:#ffffff"></div>
<div class="a" style="left:191.0px;top:1058.8px;width:1px;height:34.4px;background:#d4d4d4"></div>
<div class="a" style="left:350.5px;top:1058.8px;width:1px;height:34.4px;background:#d4d4d4"></div>
<div class="a" style="left:454.5px;top:1058.8px;width:1px;height:34.4px;background:#d4d4d4"></div>
<div class="a" style="left:587.5px;top:1058.8px;width:1px;height:34.4px;background:#d4d4d4"></div>
<div class="a" style="left:677.0px;top:1058.8px;width:1px;height:34.4px;background:#d4d4d4"></div>
<div class="a" style="left:774.5px;top:1058.8px;width:1px;height:34.4px;background:#d4d4d4"></div>
<div class="a" style="left:915.0px;top:1058.8px;width:1px;height:34.4px;background:#d4d4d4"></div>
<div class="a" style="left:1197.0px;top:1058.8px;width:1px;height:34.4px;background:#d4d4d4"></div>
<div class="a" style="left:46.5px;top:1058.05px;width:1252.5px;height:1.5px;background:#a9d18e"></div>
<div class="a" style="left:46.5px;top:1093.2px;width:1252.5px;height:34.4px;background:#e2efd9"></div>
<div class="a" style="left:46.5px;top:1092.45px;width:1252.5px;height:1.5px;background:#a9d18e"></div>
<div class="a" style="left:46.5px;top:1127.6px;width:1252.5px;height:34.4px;background:#ffffff"></div>
<div class="a" style="left:191.0px;top:1127.6px;width:1px;height:34.4px;background:#d4d4d4"></div>
<div class="a" style="left:350.5px;top:1127.6px;width:1px;height:34.4px;background:#d4d4d4"></div>
<div class="a" style="left:454.5px;top:1127.6px;width:1px;height:34.4px;background:#d4d4d4"></div>
<div class="a" style="left:587.5px;top:1127.6px;width:1px;height:34.4px;background:#d4d4d4"></div>
<div class="a" style="left:677.0px;top:1127.6px;width:1px;height:34.4px;background:#d4d4d4"></div>
<div class="a" style="left:774.5px;top:1127.6px;width:1px;height:34.4px;background:#d4d4d4"></div>
<div class="a" style="left:915.0px;top:1127.6px;width:1px;height:34.4px;background:#d4d4d4"></div>
<div class="a" style="left:1197.0px;top:1127.6px;width:1px;height:34.4px;background:#d4d4d4"></div>
<div class="a" style="left:46.5px;top:1126.85px;width:1252.5px;height:1.5px;background:#a9d18e"></div>
<div class="a" style="left:46.5px;top:1162.0px;width:1252.5px;height:34.4px;background:#e2efd9"></div>
<div class="a" style="left:46.5px;top:1161.25px;width:1252.5px;height:1.5px;background:#a9d18e"></div>
<div class="a" style="left:46.5px;top:1196.4px;width:1252.5px;height:34.4px;background:#ffffff"></div>
<div class="a" style="left:191.0px;top:1196.4px;width:1px;height:34.4px;background:#d4d4d4"></div>
<div class="a" style="left:350.5px;top:1196.4px;width:1px;height:34.4px;background:#d4d4d4"></div>
<div class="a" style="left:454.5px;top:1196.4px;width:1px;height:34.4px;background:#d4d4d4"></div>
<div class="a" style="left:587.5px;top:1196.4px;width:1px;height:34.4px;background:#d4d4d4"></div>
<div class="a" style="left:677.0px;top:1196.4px;width:1px;height:34.4px;background:#d4d4d4"></div>
<div class="a" style="left:774.5px;top:1196.4px;width:1px;height:34.4px;background:#d4d4d4"></div>
<div class="a" style="left:915.0px;top:1196.4px;width:1px;height:34.4px;background:#d4d4d4"></div>
<div class="a" style="left:1197.0px;top:1196.4px;width:1px;height:34.4px;background:#d4d4d4"></div>
<div class="a" style="left:46.5px;top:1195.65px;width:1252.5px;height:1.5px;background:#a9d18e"></div>
<div class="a" style="left:46.5px;top:1230.8px;width:1252.5px;height:34.4px;background:#e2efd9"></div>
<div class="a" style="left:46.5px;top:1230.05px;width:1252.5px;height:1.5px;background:#a9d18e"></div>
<div class="a" style="left:46.5px;top:1265.1999999999998px;width:1252.5px;height:34.4px;background:#ffffff"></div>
<div class="a" style="left:191.0px;top:1265.1999999999998px;width:1px;height:34.4px;background:#d4d4d4"></div>
<div class="a" style="left:350.5px;top:1265.1999999999998px;width:1px;height:34.4px;background:#d4d4d4"></div>
<div class="a" style="left:454.5px;top:1265.1999999999998px;width:1px;height:34.4px;background:#d4d4d4"></div>
<div class="a" style="left:587.5px;top:1265.1999999999998px;width:1px;height:34.4px;background:#d4d4d4"></div>
<div class="a" style="left:677.0px;top:1265.1999999999998px;width:1px;height:34.4px;background:#d4d4d4"></div>
<div class="a" style="left:774.5px;top:1265.1999999999998px;width:1px;height:34.4px;background:#d4d4d4"></div>
<div class="a" style="left:915.0px;top:1265.1999999999998px;width:1px;height:34.4px;background:#d4d4d4"></div>
<div class="a" style="left:1197.0px;top:1265.1999999999998px;width:1px;height:34.4px;background:#d4d4d4"></div>
<div class="a" style="left:46.5px;top:1264.4499999999998px;width:1252.5px;height:1.5px;background:#a9d18e"></div>
<div class="a" style="left:46.5px;top:1299.6px;width:1252.5px;height:34.4px;background:#e2efd9"></div>
<div class="a" style="left:46.5px;top:1298.85px;width:1252.5px;height:1.5px;background:#a9d18e"></div>
<div class="a" style="left:46.5px;top:1334.0px;width:1252.5px;height:34.4px;background:#ffffff"></div>
<div class="a" style="left:191.0px;top:1334.0px;width:1px;height:34.4px;background:#d4d4d4"></div>
<div class="a" style="left:350.5px;top:1334.0px;width:1px;height:34.4px;background:#d4d4d4"></div>
<div class="a" style="left:454.5px;top:1334.0px;width:1px;height:34.4px;background:#d4d4d4"></div>
<div class="a" style="left:587.5px;top:1334.0px;width:1px;height:34.4px;background:#d4d4d4"></div>
<div class="a" style="left:677.0px;top:1334.0px;width:1px;height:34.4px;background:#d4d4d4"></div>
<div class="a" style="left:774.5px;top:1334.0px;width:1px;height:34.4px;background:#d4d4d4"></div>
<div class="a" style="left:915.0px;top:1334.0px;width:1px;height:34.4px;background:#d4d4d4"></div>
<div class="a" style="left:1197.0px;top:1334.0px;width:1px;height:34.4px;background:#d4d4d4"></div>
<div class="a" style="left:46.5px;top:1333.25px;width:1252.5px;height:1.5px;background:#a9d18e"></div>
<div class="a" style="left:46.5px;top:1368.4px;width:1252.5px;height:34.4px;background:#e2efd9"></div>
<div class="a" style="left:46.5px;top:1367.65px;width:1252.5px;height:1.5px;background:#a9d18e"></div>
<div class="a" style="left:46.5px;top:1402.05px;width:1252.5px;height:1.5px;background:#a9d18e"></div>
<div class="a" style="left:191.0px;top:1402.8px;width:1px;height:5.7000000000000455px;background:#d4d4d4"></div>
<div class="a" style="left:350.5px;top:1402.8px;width:1px;height:5.7000000000000455px;background:#d4d4d4"></div>
<div class="a" style="left:454.5px;top:1402.8px;width:1px;height:5.7000000000000455px;background:#d4d4d4"></div>
<div class="a" style="left:587.5px;top:1402.8px;width:1px;height:5.7000000000000455px;background:#d4d4d4"></div>
<div class="a" style="left:677.0px;top:1402.8px;width:1px;height:5.7000000000000455px;background:#d4d4d4"></div>
<div class="a" style="left:774.5px;top:1402.8px;width:1px;height:5.7000000000000455px;background:#d4d4d4"></div>
<div class="a" style="left:915.0px;top:1402.8px;width:1px;height:5.7000000000000455px;background:#d4d4d4"></div>
<div class="a" style="left:1197.0px;top:1402.8px;width:1px;height:5.7000000000000455px;background:#d4d4d4"></div>
<div class="a" style="left:0;top:1408.5px;width:1299px;height:10px;background:#fff"></div>
<div class="t" style="left:50.59px;top:447.53px;font-size:22.66px;color:#ffffff;letter-spacing:-0.600px;font-weight:700;width:107.41px;overflow:hidden"><span style="display:inline-block;transform:scaleX(0.9784);transform-origin:0.91px 0">COUNTRY</span></div>
<div class="t" style="left:195.49px;top:447.53px;font-size:22.66px;color:#ffffff;letter-spacing:0.494px;font-weight:700;width:122.01px;overflow:hidden">Country.1</div>
<div class="t" style="left:354.22px;top:447.53px;font-size:22.66px;color:#ffffff;letter-spacing:-0.600px;font-weight:700;width:67.28px;overflow:hidden"><span style="display:inline-block;transform:scaleX(0.9395);transform-origin:0.68px 0">SEX</span></div>
<div class="t" style="left:458.42px;top:447.53px;font-size:22.66px;color:#ffffff;letter-spacing:-0.552px;font-weight:700;width:96.08px;overflow:hidden">Sex.1</div>
<div class="t" style="left:592.72px;top:447.53px;font-size:22.66px;color:#ffffff;letter-spacing:-0.600px;font-weight:700;width:51.28px;overflow:hidden"><span style="display:inline-block;transform:scaleX(0.9529);transform-origin:0.68px 0">AGE</span></div>
<div class="t" style="left:682.12px;top:447.53px;font-size:22.66px;color:#ffffff;letter-spacing:0.900px;font-weight:700;width:59.38px;overflow:hidden">Age.1</div>
<div class="t" style="left:779.91px;top:447.53px;font-size:22.66px;color:#ffffff;letter-spacing:0.200px;font-weight:700;width:102.09px;overflow:hidden">EMPSTAT</div>
<div class="t" style="left:919.31px;top:447.53px;font-size:22.66px;color:#ffffff;letter-spacing:0.417px;font-weight:700;width:244.69px;overflow:hidden">Employment status</div>
<div class="t" style="left:1200.75px;top:447.53px;font-size:22.66px;color:#ffffff;letter-spacing:-0.600px;font-weight:700;width:96.25px;overflow:hidden"><span style="display:inline-block;transform:scaleX(0.9250);transform-origin:0.45px 0">JOBTYPE</span></div>
<div class="a" style="left:158.0px;top:440.1px;width:33.5px;height:32.5px;border:1px solid #b8b8b8;background:linear-gradient(#fdfdfd,#eceef1)"><svg style="position:absolute;left:10px;top:12px" width="13" height="7"><polygon points="0,0 12,0 6,6.5" fill="#6e6e6e"/></svg></div>
<div class="a" style="left:317.5px;top:440.1px;width:33.5px;height:32.5px;border:1px solid #b8b8b8;background:linear-gradient(#fdfdfd,#eceef1)"><svg style="position:absolute;left:10px;top:12px" width="13" height="7"><polygon points="0,0 12,0 6,6.5" fill="#6e6e6e"/></svg></div>
<div class="a" style="left:421.5px;top:440.1px;width:33.5px;height:32.5px;border:1px solid #b8b8b8;background:linear-gradient(#fdfdfd,#eceef1)"><svg style="position:absolute;left:10px;top:12px" width="13" height="7"><polygon points="0,0 12,0 6,6.5" fill="#6e6e6e"/></svg></div>
<div class="a" style="left:554.5px;top:440.1px;width:33.5px;height:32.5px;border:1px solid #b8b8b8;background:linear-gradient(#fdfdfd,#eceef1)"><svg style="position:absolute;left:10px;top:12px" width="13" height="7"><polygon points="0,0 12,0 6,6.5" fill="#6e6e6e"/></svg></div>
<div class="a" style="left:644.0px;top:440.1px;width:33.5px;height:32.5px;border:1px solid #b8b8b8;background:linear-gradient(#fdfdfd,#eceef1)"><svg style="position:absolute;left:10px;top:12px" width="13" height="7"><polygon points="0,0 12,0 6,6.5" fill="#6e6e6e"/></svg></div>
<div class="a" style="left:741.5px;top:440.1px;width:33.5px;height:32.5px;border:1px solid #b8b8b8;background:linear-gradient(#fdfdfd,#eceef1)"><svg style="position:absolute;left:10px;top:12px" width="13" height="7"><polygon points="0,0 12,0 6,6.5" fill="#6e6e6e"/></svg></div>
<div class="a" style="left:882.0px;top:440.1px;width:33.5px;height:32.5px;border:1px solid #b8b8b8;background:linear-gradient(#fdfdfd,#eceef1)"><svg style="position:absolute;left:10px;top:12px" width="13" height="7"><polygon points="0,0 12,0 6,6.5" fill="#6e6e6e"/></svg></div>
<div class="a" style="left:1164.0px;top:440.1px;width:33.5px;height:32.5px;border:1px solid #b8b8b8;background:linear-gradient(#fdfdfd,#eceef1)"><svg style="position:absolute;left:10px;top:12px" width="13" height="7"><polygon points="0,0 12,0 6,6.5" fill="#6e6e6e"/></svg></div>
<div class="a" style="left:1297.0px;top:440.1px;width:33.5px;height:32.5px;border:1px solid #b8b8b8;background:linear-gradient(#fdfdfd,#eceef1)"><svg style="position:absolute;left:10px;top:12px" width="13" height="7"><polygon points="0,0 12,0 6,6.5" fill="#6e6e6e"/></svg></div>
<div class="t" style="left:49.89px;top:481.83px;font-size:22.66px;color:#000000;letter-spacing:-0.600px;transform:scaleX(0.9461);transform-origin:1.81px 0">USA</div>
<div class="t" style="left:194.59px;top:481.83px;font-size:22.66px;color:#000000;letter-spacing:0.536px">United States</div>
<div class="t" style="left:353.89px;top:481.83px;font-size:22.66px;color:#000000;letter-spacing:1.200px;transform:scaleX(1.0735);transform-origin:1.81px 0">MW</div>
<div class="t" style="left:459.10px;top:481.83px;font-size:22.66px;color:#000000;letter-spacing:0.524px">All persons</div>
<div class="t" style="left:594.87px;top:481.83px;font-size:22.66px;color:#000000;letter-spacing:0.831px">900000</div>
<div class="t" style="left:684.85px;top:481.83px;font-size:22.66px;color:#000000;letter-spacing:0.800px">Total</div>
<div class="t" style="left:779.49px;top:481.83px;font-size:22.66px;color:#000000;letter-spacing:-0.600px;transform:scaleX(0.9262);transform-origin:1.81px 0">DE</div>
<div class="t" style="left:919.09px;top:481.83px;font-size:22.66px;color:#000000;letter-spacing:0.647px">Dependent employment</div>
<div class="t" style="left:1202.05px;top:481.83px;font-size:22.66px;color:#000000;letter-spacing:-0.600px;transform:scaleX(0.9381);transform-origin:0.45px 0">TED</div>
<div class="t" style="left:49.89px;top:516.23px;font-size:22.66px;color:#000000;letter-spacing:-0.600px;transform:scaleX(0.9461);transform-origin:1.81px 0">USA</div>
<div class="t" style="left:194.59px;top:516.23px;font-size:22.66px;color:#000000;letter-spacing:0.536px">United States</div>
<div class="t" style="left:353.89px;top:516.23px;font-size:22.66px;color:#000000;letter-spacing:1.200px;transform:scaleX(1.0735);transform-origin:1.81px 0">MW</div>
<div class="t" style="left:459.10px;top:516.23px;font-size:22.66px;color:#000000;letter-spacing:0.524px">All persons</div>
<div class="t" style="left:594.87px;top:516.23px;font-size:22.66px;color:#000000;letter-spacing:0.831px">900000</div>
<div class="t" style="left:684.85px;top:516.23px;font-size:22.66px;color:#000000;letter-spacing:0.800px">Total</div>
<div class="t" style="left:779.49px;top:516.23px;font-size:22.66px;color:#000000;letter-spacing:-0.600px;transform:scaleX(0.9262);transform-origin:1.81px 0">DE</div>
<div class="t" style="left:919.09px;top:516.23px;font-size:22.66px;color:#000000;letter-spacing:0.647px">Dependent employment</div>
<div class="t" style="left:1202.05px;top:516.23px;font-size:22.66px;color:#000000;letter-spacing:-0.600px;transform:scaleX(0.9381);transform-origin:0.45px 0">TED</div>
<div class="t" style="left:49.89px;top:550.63px;font-size:22.66px;color:#000000;letter-spacing:-0.600px;transform:scaleX(0.9461);transform-origin:1.81px 0">USA</div>
<div class="t" style="left:194.59px;top:550.63px;font-size:22.66px;color:#000000;letter-spacing:0.536px">United States</div>
<div class="t" style="left:353.89px;top:550.63px;font-size:22.66px;color:#000000;letter-spacing:1.200px;transform:scaleX(1.0735);transform-origin:1.81px 0">MW</div>
<div class="t" style="left:459.10px;top:550.63px;font-size:22.66px;color:#000000;letter-spacing:0.524px">All persons</div>
<div class="t" style="left:594.87px;top:550.63px;font-size:22.66px;color:#000000;letter-spacing:0.831px">900000</div>
<div class="t" style="left:684.85px;top:550.63px;font-size:22.66px;color:#000000;letter-spacing:0.800px">Total</div>
<div class="t" style="left:779.49px;top:550.63px;font-size:22.66px;color:#000000;letter-spacing:-0.600px;transform:scaleX(0.9262);transform-origin:1.81px 0">DE</div>
<div class="t" style="left:919.09px;top:550.63px;font-size:22.66px;color:#000000;letter-spacing:0.647px">Dependent employment</div>
<div class="t" style="left:1202.05px;top:550.63px;font-size:22.66px;color:#000000;letter-spacing:-0.600px;transform:scaleX(0.9381);transform-origin:0.45px 0">TED</div>
<div class="t" style="left:49.89px;top:585.03px;font-size:22.66px;color:#000000;letter-spacing:-0.600px;transform:scaleX(0.9461);transform-origin:1.81px 0">USA</div>
<div class="t" style="left:194.59px;top:585.03px;font-size:22.66px;color:#000000;letter-spacing:0.536px">United States</div>
<div class="t" style="left:353.89px;top:585.03px;font-size:22.66px;color:#000000;letter-spacing:1.200px;transform:scaleX(1.0735);transform-origin:1.81px 0">MW</div>
<div class="t" style="left:459.10px;top:585.03px;font-size:22.66px;color:#000000;letter-spacing:0.524px">All persons</div>
<div class="t" style="left:594.87px;top:585.03px;font-size:22.66px;color:#000000;letter-spacing:0.831px">900000</div>
<div class="t" style="left:684.85px;top:585.03px;font-size:22.66px;color:#000000;letter-spacing:0.800px">Total</div>
<div class="t" style="left:779.49px;top:585.03px;font-size:22.66px;color:#000000;letter-spacing:-0.600px;transform:scaleX(0.9262);transform-origin:1.81px 0">DE</div>
<div class="t" style="left:919.09px;top:585.03px;font-size:22.66px;color:#000000;letter-spacing:0.647px">Dependent employment</div>
<div class="t" style="left:1202.05px;top:585.03px;font-size:22.66px;color:#000000;letter-spacing:-0.600px;transform:scaleX(0.9381);transform-origin:0.45px 0">TED</div>
<div class="t" style="left:49.89px;top:619.43px;font-size:22.66px;color:#000000;letter-spacing:-0.600px;transform:scaleX(0.9461);transform-origin:1.81px 0">USA</div>
<div class="t" style="left:194.59px;top:619.43px;font-size:22.66px;color:#000000;letter-spacing:0.536px">United States</div>
<div class="t" style="left:353.89px;top:619.43px;font-size:22.66px;color:#000000;letter-spacing:1.200px;transform:scaleX(1.0735);transform-origin:1.81px 0">MW</div>
<div class="t" style="left:459.10px;top:619.43px;font-size:22.66px;color:#000000;letter-spacing:0.524px">All persons</div>
<div class="t" style="left:594.87px;top:619.43px;font-size:22.66px;color:#000000;letter-spacing:0.831px">900000</div>
<div class="t" style="left:684.85px;top:619.43px;font-size:22.66px;color:#000000;letter-spacing:0.800px">Total</div>
<div class="t" style="left:779.49px;top:619.43px;font-size:22.66px;color:#000000;letter-spacing:-0.600px;transform:scaleX(0.9262);transform-origin:1.81px 0">DE</div>
<div class="t" style="left:919.09px;top:619.43px;font-size:22.66px;color:#000000;letter-spacing:0.647px">Dependent employment</div>
<div class="t" style="left:1202.05px;top:619.43px;font-size:22.66px;color:#000000;letter-spacing:-0.600px;transform:scaleX(0.9381);transform-origin:0.45px 0">TED</div>
<div class="t" style="left:49.89px;top:653.83px;font-size:22.66px;color:#000000;letter-spacing:-0.600px;transform:scaleX(0.9461);transform-origin:1.81px 0">USA</div>
<div class="t" style="left:194.59px;top:653.83px;font-size:22.66px;color:#000000;letter-spacing:0.536px">United States</div>
<div class="t" style="left:353.89px;top:653.83px;font-size:22.66px;color:#000000;letter-spacing:1.200px;transform:scaleX(1.0735);transform-origin:1.81px 0">MW</div>
<div class="t" style="left:459.10px;top:653.83px;font-size:22.66px;color:#000000;letter-spacing:0.524px">All persons</div>
<div class="t" style="left:594.87px;top:653.83px;font-size:22.66px;color:#000000;letter-spacing:0.831px">900000</div>
<div class="t" style="left:684.85px;top:653.83px;font-size:22.66px;color:#000000;letter-spacing:0.800px">Total</div>
<div class="t" style="left:779.49px;top:653.83px;font-size:22.66px;color:#000000;letter-spacing:-0.600px;transform:scaleX(0.9262);transform-origin:1.81px 0">DE</div>
<div class="t" style="left:919.09px;top:653.83px;font-size:22.66px;color:#000000;letter-spacing:0.647px">Dependent employment</div>
<div class="t" style="left:1202.05px;top:653.83px;font-size:22.66px;color:#000000;letter-spacing:-0.600px;transform:scaleX(0.9381);transform-origin:0.45px 0">TED</div>
<div class="t" style="left:49.89px;top:688.23px;font-size:22.66px;color:#000000;letter-spacing:-0.600px;transform:scaleX(0.9461);transform-origin:1.81px 0">USA</div>
<div class="t" style="left:194.59px;top:688.23px;font-size:22.66px;color:#000000;letter-spacing:0.536px">United States</div>
<div class="t" style="left:353.89px;top:688.23px;font-size:22.66px;color:#000000;letter-spacing:1.200px;transform:scaleX(1.0735);transform-origin:1.81px 0">MW</div>
<div class="t" style="left:459.10px;top:688.23px;font-size:22.66px;color:#000000;letter-spacing:0.524px">All persons</div>
<div class="t" style="left:594.87px;top:688.23px;font-size:22.66px;color:#000000;letter-spacing:0.831px">900000</div>
<div class="t" style="left:684.85px;top:688.23px;font-size:22.66px;color:#000000;letter-spacing:0.800px">Total</div>
<div class="t" style="left:779.49px;top:688.23px;font-size:22.66px;color:#000000;letter-spacing:-0.600px;transform:scaleX(0.9262);transform-origin:1.81px 0">DE</div>
<div class="t" style="left:919.09px;top:688.23px;font-size:22.66px;color:#000000;letter-spacing:0.647px">Dependent employment</div>
<div class="t" style="left:1202.05px;top:688.23px;font-size:22.66px;color:#000000;letter-spacing:-0.600px;transform:scaleX(0.9381);transform-origin:0.45px 0">TED</div>
<div class="t" style="left:49.89px;top:722.63px;font-size:22.66px;color:#000000;letter-spacing:-0.600px;transform:scaleX(0.9461);transform-origin:1.81px 0">USA</div>
<div class="t" style="left:194.59px;top:722.63px;font-size:22.66px;color:#000000;letter-spacing:0.536px">United States</div>
<div class="t" style="left:353.89px;top:722.63px;font-size:22.66px;color:#000000;letter-spacing:1.200px;transform:scaleX(1.0735);transform-origin:1.81px 0">MW</div>
<div class="t" style="left:459.10px;top:722.63px;font-size:22.66px;color:#000000;letter-spacing:0.524px">All persons</div>
<div class="t" style="left:594.87px;top:722.63px;font-size:22.66px;color:#000000;letter-spacing:0.831px">900000</div>
<div class="t" style="left:684.85px;top:722.63px;font-size:22.66px;color:#000000;letter-spacing:0.800px">Total</div>
<div class="t" style="left:779.49px;top:722.63px;font-size:22.66px;color:#000000;letter-spacing:-0.600px;transform:scaleX(0.9262);transform-origin:1.81px 0">DE</div>
<div class="t" style="left:919.09px;top:722.63px;font-size:22.66px;color:#000000;letter-spacing:0.647px">Dependent employment</div>
<div class="t" style="left:1202.05px;top:722.63px;font-size:22.66px;color:#000000;letter-spacing:-0.600px;transform:scaleX(0.9381);transform-origin:0.45px 0">TED</div>
<div class="t" style="left:49.89px;top:757.03px;font-size:22.66px;color:#000000;letter-spacing:-0.600px;transform:scaleX(0.9461);transform-origin:1.81px 0">USA</div>
<div class="t" style="left:194.59px;top:757.03px;font-size:22.66px;color:#000000;letter-spacing:0.536px">United States</div>
<div class="t" style="left:353.89px;top:757.03px;font-size:22.66px;color:#000000;letter-spacing:1.200px;transform:scaleX(1.0735);transform-origin:1.81px 0">MW</div>
<div class="t" style="left:459.10px;top:757.03px;font-size:22.66px;color:#000000;letter-spacing:0.524px">All persons</div>
<div class="t" style="left:594.87px;top:757.03px;font-size:22.66px;color:#000000;letter-spacing:0.831px">900000</div>
<div class="t" style="left:684.85px;top:757.03px;font-size:22.66px;color:#000000;letter-spacing:0.800px">Total</div>
<div class="t" style="left:779.49px;top:757.03px;font-size:22.66px;color:#000000;letter-spacing:-0.600px;transform:scaleX(0.9262);transform-origin:1.81px 0">DE</div>
<div class="t" style="left:919.09px;top:757.03px;font-size:22.66px;color:#000000;letter-spacing:0.647px">Dependent employment</div>
<div class="t" style="left:1202.05px;top:757.03px;font-size:22.66px;color:#000000;letter-spacing:-0.600px;transform:scaleX(0.9381);transform-origin:0.45px 0">TED</div>
<div class="t" style="left:49.89px;top:791.43px;font-size:22.66px;color:#000000;letter-spacing:-0.600px;transform:scaleX(0.9461);transform-origin:1.81px 0">USA</div>
<div class="t" style="left:194.59px;top:791.43px;font-size:22.66px;color:#000000;letter-spacing:0.536px">United States</div>
<div class="t" style="left:353.89px;top:791.43px;font-size:22.66px;color:#000000;letter-spacing:1.200px;transform:scaleX(1.0735);transform-origin:1.81px 0">MW</div>
<div class="t" style="left:459.10px;top:791.43px;font-size:22.66px;color:#000000;letter-spacing:0.524px">All persons</div>
<div class="t" style="left:594.87px;top:791.43px;font-size:22.66px;color:#000000;letter-spacing:0.831px">900000</div>
<div class="t" style="left:684.85px;top:791.43px;font-size:22.66px;color:#000000;letter-spacing:0.800px">Total</div>
<div class="t" style="left:779.49px;top:791.43px;font-size:22.66px;color:#000000;letter-spacing:-0.600px;transform:scaleX(0.9262);transform-origin:1.81px 0">DE</div>
<div class="t" style="left:919.09px;top:791.43px;font-size:22.66px;color:#000000;letter-spacing:0.647px">Dependent employment</div>
<div class="t" style="left:1202.05px;top:791.43px;font-size:22.66px;color:#000000;letter-spacing:-0.600px;transform:scaleX(0.9381);transform-origin:0.45px 0">TED</div>
<div class="t" style="left:49.89px;top:825.83px;font-size:22.66px;color:#000000;letter-spacing:-0.600px;transform:scaleX(0.9461);transform-origin:1.81px 0">USA</div>
<div class="t" style="left:194.59px;top:825.83px;font-size:22.66px;color:#000000;letter-spacing:0.536px">United States</div>
<div class="t" style="left:353.89px;top:825.83px;font-size:22.66px;color:#000000;letter-spacing:1.200px;transform:scaleX(1.0735);transform-origin:1.81px 0">MW</div>
<div class="t" style="left:459.10px;top:825.83px;font-size:22.66px;color:#000000;letter-spacing:0.524px">All persons</div>
<div class="t" style="left:594.87px;top:825.83px;font-size:22.66px;color:#000000;letter-spacing:0.831px">900000</div>
<div class="t" style="left:684.85px;top:825.83px;font-size:22.66px;color:#000000;letter-spacing:0.800px">Total</div>
<div class="t" style="left:779.49px;top:825.83px;font-size:22.66px;color:#000000;letter-spacing:-0.600px;transform:scaleX(0.9262);transform-origin:1.81px 0">DE</div>
<div class="t" style="left:919.09px;top:825.83px;font-size:22.66px;color:#000000;letter-spacing:0.647px">Dependent employment</div>
<div class="t" style="left:1202.05px;top:825.83px;font-size:22.66px;color:#000000;letter-spacing:-0.600px;transform:scaleX(0.9381);transform-origin:0.45px 0">TED</div>
<div class="t" style="left:49.89px;top:860.23px;font-size:22.66px;color:#000000;letter-spacing:-0.600px;transform:scaleX(0.9461);transform-origin:1.81px 0">USA</div>
<div class="t" style="left:194.59px;top:860.23px;font-size:22.66px;color:#000000;letter-spacing:0.536px">United States</div>
<div class="t" style="left:353.89px;top:860.23px;font-size:22.66px;color:#000000;letter-spacing:1.200px;transform:scaleX(1.0735);transform-origin:1.81px 0">MW</div>
<div class="t" style="left:459.10px;top:860.23px;font-size:22.66px;color:#000000;letter-spacing:0.524px">All persons</div>
<div class="t" style="left:594.87px;top:860.23px;font-size:22.66px;color:#000000;letter-spacing:0.831px">900000</div>
<div class="t" style="left:684.85px;top:860.23px;font-size:22.66px;color:#000000;letter-spacing:0.800px">Total</div>
<div class="t" style="left:779.49px;top:860.23px;font-size:22.66px;color:#000000;letter-spacing:-0.600px;transform:scaleX(0.9262);transform-origin:1.81px 0">DE</div>
<div class="t" style="left:919.09px;top:860.23px;font-size:22.66px;color:#000000;letter-spacing:0.647px">Dependent employment</div>
<div class="t" style="left:1202.05px;top:860.23px;font-size:22.66px;color:#000000;letter-spacing:-0.600px;transform:scaleX(0.9381);transform-origin:0.45px 0">TED</div>
<div class="t" style="left:49.89px;top:894.63px;font-size:22.66px;color:#000000;letter-spacing:-0.600px;transform:scaleX(0.9461);transform-origin:1.81px 0">USA</div>
<div class="t" style="left:194.59px;top:894.63px;font-size:22.66px;color:#000000;letter-spacing:0.536px">United States</div>
<div class="t" style="left:353.89px;top:894.63px;font-size:22.66px;color:#000000;letter-spacing:1.200px;transform:scaleX(1.0735);transform-origin:1.81px 0">MW</div>
<div class="t" style="left:459.10px;top:894.63px;font-size:22.66px;color:#000000;letter-spacing:0.524px">All persons</div>
<div class="t" style="left:594.87px;top:894.63px;font-size:22.66px;color:#000000;letter-spacing:0.831px">900000</div>
<div class="t" style="left:684.85px;top:894.63px;font-size:22.66px;color:#000000;letter-spacing:0.800px">Total</div>
<div class="t" style="left:779.49px;top:894.63px;font-size:22.66px;color:#000000;letter-spacing:-0.600px;transform:scaleX(0.9262);transform-origin:1.81px 0">DE</div>
<div class="t" style="left:919.09px;top:894.63px;font-size:22.66px;color:#000000;letter-spacing:0.647px">Dependent employment</div>
<div class="t" style="left:1202.05px;top:894.63px;font-size:22.66px;color:#000000;letter-spacing:-0.600px;transform:scaleX(0.9381);transform-origin:0.45px 0">TED</div>
<div class="t" style="left:49.89px;top:929.03px;font-size:22.66px;color:#000000;letter-spacing:-0.600px;transform:scaleX(0.9461);transform-origin:1.81px 0">USA</div>
<div class="t" style="left:194.59px;top:929.03px;font-size:22.66px;color:#000000;letter-spacing:0.536px">United States</div>
<div class="t" style="left:353.89px;top:929.03px;font-size:22.66px;color:#000000;letter-spacing:1.200px;transform:scaleX(1.0735);transform-origin:1.81px 0">MW</div>
<div class="t" style="left:459.10px;top:929.03px;font-size:22.66px;color:#000000;letter-spacing:0.524px">All persons</div>
<div class="t" style="left:594.87px;top:929.03px;font-size:22.66px;color:#000000;letter-spacing:0.831px">900000</div>
<div class="t" style="left:684.85px;top:929.03px;font-size:22.66px;color:#000000;letter-spacing:0.800px">Total</div>
<div class="t" style="left:779.49px;top:929.03px;font-size:22.66px;color:#000000;letter-spacing:-0.600px;transform:scaleX(0.9262);transform-origin:1.81px 0">DE</div>
<div class="t" style="left:919.09px;top:929.03px;font-size:22.66px;color:#000000;letter-spacing:0.647px">Dependent employment</div>
<div class="t" style="left:1202.05px;top:929.03px;font-size:22.66px;color:#000000;letter-spacing:-0.600px;transform:scaleX(0.9381);transform-origin:0.45px 0">TED</div>
<div class="t" style="left:49.89px;top:963.43px;font-size:22.66px;color:#000000;letter-spacing:-0.600px;transform:scaleX(0.9461);transform-origin:1.81px 0">USA</div>
<div class="t" style="left:194.59px;top:963.43px;font-size:22.66px;color:#000000;letter-spacing:0.536px">United States</div>
<div class="t" style="left:353.89px;top:963.43px;font-size:22.66px;color:#000000;letter-spacing:1.200px;transform:scaleX(1.0735);transform-origin:1.81px 0">MW</div>
<div class="t" style="left:459.10px;top:963.43px;font-size:22.66px;color:#000000;letter-spacing:0.524px">All persons</div>
<div class="t" style="left:594.87px;top:963.43px;font-size:22.66px;color:#000000;letter-spacing:0.831px">900000</div>
<div class="t" style="left:684.85px;top:963.43px;font-size:22.66px;color:#000000;letter-spacing:0.800px">Total</div>
<div class="t" style="left:779.49px;top:963.43px;font-size:22.66px;color:#000000;letter-spacing:-0.600px;transform:scaleX(0.9262);transform-origin:1.81px 0">DE</div>
<div class="t" style="left:919.09px;top:963.43px;font-size:22.66px;color:#000000;letter-spacing:0.647px">Dependent employment</div>
<div class="t" style="left:1202.05px;top:963.43px;font-size:22.66px;color:#000000;letter-spacing:-0.600px;transform:scaleX(0.9381);transform-origin:0.45px 0">TED</div>
<div class="t" style="left:49.89px;top:997.83px;font-size:22.66px;color:#000000;letter-spacing:-0.600px;transform:scaleX(0.9461);transform-origin:1.81px 0">USA</div>
<div class="t" style="left:194.59px;top:997.83px;font-size:22.66px;color:#000000;letter-spacing:0.536px">United States</div>
<div class="t" style="left:353.89px;top:997.83px;font-size:22.66px;color:#000000;letter-spacing:1.200px;transform:scaleX(1.0735);transform-origin:1.81px 0">MW</div>
<div class="t" style="left:459.10px;top:997.83px;font-size:22.66px;color:#000000;letter-spacing:0.524px">All persons</div>
<div class="t" style="left:594.87px;top:997.83px;font-size:22.66px;color:#000000;letter-spacing:0.831px">900000</div>
<div class="t" style="left:684.85px;top:997.83px;font-size:22.66px;color:#000000;letter-spacing:0.800px">Total</div>
<div class="t" style="left:779.49px;top:997.83px;font-size:22.66px;color:#000000;letter-spacing:-0.600px;transform:scaleX(0.9262);transform-origin:1.81px 0">DE</div>
<div class="t" style="left:919.09px;top:997.83px;font-size:22.66px;color:#000000;letter-spacing:0.647px">Dependent employment</div>
<div class="t" style="left:1202.05px;top:997.83px;font-size:22.66px;color:#000000;letter-spacing:-0.600px;transform:scaleX(0.9381);transform-origin:0.45px 0">TED</div>
<div class="t" style="left:49.89px;top:1032.23px;font-size:22.66px;color:#000000;letter-spacing:-0.600px;transform:scaleX(0.9461);transform-origin:1.81px 0">USA</div>
<div class="t" style="left:194.59px;top:1032.23px;font-size:22.66px;color:#000000;letter-spacing:0.536px">United States</div>
<div class="t" style="left:353.89px;top:1032.23px;font-size:22.66px;color:#000000;letter-spacing:1.200px;transform:scaleX(1.0735);transform-origin:1.81px 0">MW</div>
<div class="t" style="left:459.10px;top:1032.23px;font-size:22.66px;color:#000000;letter-spacing:0.524px">All persons</div>
<div class="t" style="left:594.87px;top:1032.23px;font-size:22.66px;color:#000000;letter-spacing:0.831px">900000</div>
<div class="t" style="left:684.85px;top:1032.23px;font-size:22.66px;color:#000000;letter-spacing:0.800px">Total</div>
<div class="t" style="left:779.49px;top:1032.23px;font-size:22.66px;color:#000000;letter-spacing:-0.600px;transform:scaleX(0.9262);transform-origin:1.81px 0">DE</div>
<div class="t" style="left:919.09px;top:1032.23px;font-size:22.66px;color:#000000;letter-spacing:0.647px">Dependent employment</div>
<div class="t" style="left:1202.05px;top:1032.23px;font-size:22.66px;color:#000000;letter-spacing:-0.600px;transform:scaleX(0.9381);transform-origin:0.45px 0">TED</div>
<div class="t" style="left:49.89px;top:1066.63px;font-size:22.66px;color:#000000;letter-spacing:-0.600px;transform:scaleX(0.9461);transform-origin:1.81px 0">USA</div>
<div class="t" style="left:194.59px;top:1066.63px;font-size:22.66px;color:#000000;letter-spacing:0.536px">United States</div>
<div class="t" style="left:353.89px;top:1066.63px;font-size:22.66px;color:#000000;letter-spacing:1.200px;transform:scaleX(1.0735);transform-origin:1.81px 0">MW</div>
<div class="t" style="left:459.10px;top:1066.63px;font-size:22.66px;color:#000000;letter-spacing:0.524px">All persons</div>
<div class="t" style="left:594.87px;top:1066.63px;font-size:22.66px;color:#000000;letter-spacing:0.831px">900000</div>
<div class="t" style="left:684.85px;top:1066.63px;font-size:22.66px;color:#000000;letter-spacing:0.800px">Total</div>
<div class="t" style="left:779.49px;top:1066.63px;font-size:22.66px;color:#000000;letter-spacing:-0.600px;transform:scaleX(0.9262);transform-origin:1.81px 0">DE</div>
<div class="t" style="left:919.09px;top:1066.63px;font-size:22.66px;color:#000000;letter-spacing:0.647px">Dependent employment</div>
<div class="t" style="left:1202.05px;top:1066.63px;font-size:22.66px;color:#000000;letter-spacing:-0.600px;transform:scaleX(0.9381);transform-origin:0.45px 0">TED</div>
<div class="t" style="left:49.89px;top:1101.03px;font-size:22.66px;color:#000000;letter-spacing:-0.600px;transform:scaleX(0.9461);transform-origin:1.81px 0">USA</div>
<div class="t" style="left:194.59px;top:1101.03px;font-size:22.66px;color:#000000;letter-spacing:0.536px">United States</div>
<div class="t" style="left:353.89px;top:1101.03px;font-size:22.66px;color:#000000;letter-spacing:1.200px;transform:scaleX(1.0735);transform-origin:1.81px 0">MW</div>
<div class="t" style="left:459.10px;top:1101.03px;font-size:22.66px;color:#000000;letter-spacing:0.524px">All persons</div>
<div class="t" style="left:594.87px;top:1101.03px;font-size:22.66px;color:#000000;letter-spacing:0.831px">900000</div>
<div class="t" style="left:684.85px;top:1101.03px;font-size:22.66px;color:#000000;letter-spacing:0.800px">Total</div>
<div class="t" style="left:779.49px;top:1101.03px;font-size:22.66px;color:#000000;letter-spacing:-0.600px;transform:scaleX(0.9262);transform-origin:1.81px 0">DE</div>
<div class="t" style="left:919.09px;top:1101.03px;font-size:22.66px;color:#000000;letter-spacing:0.647px">Dependent employment</div>
<div class="t" style="left:1202.05px;top:1101.03px;font-size:22.66px;color:#000000;letter-spacing:-0.600px;transform:scaleX(0.9381);transform-origin:0.45px 0">TED</div>
<div class="t" style="left:49.89px;top:1135.43px;font-size:22.66px;color:#000000;letter-spacing:-0.600px;transform:scaleX(0.9461);transform-origin:1.81px 0">USA</div>
<div class="t" style="left:194.59px;top:1135.43px;font-size:22.66px;color:#000000;letter-spacing:0.536px">United States</div>
<div class="t" style="left:353.89px;top:1135.43px;font-size:22.66px;color:#000000;letter-spacing:1.200px;transform:scaleX(1.0735);transform-origin:1.81px 0">MW</div>
<div class="t" style="left:459.10px;top:1135.43px;font-size:22.66px;color:#000000;letter-spacing:0.524px">All persons</div>
<div class="t" style="left:594.87px;top:1135.43px;font-size:22.66px;color:#000000;letter-spacing:0.831px">900000</div>
<div class="t" style="left:684.85px;top:1135.43px;font-size:22.66px;color:#000000;letter-spacing:0.800px">Total</div>
<div class="t" style="left:779.49px;top:1135.43px;font-size:22.66px;color:#000000;letter-spacing:-0.600px;transform:scaleX(0.9262);transform-origin:1.81px 0">DE</div>
<div class="t" style="left:919.09px;top:1135.43px;font-size:22.66px;color:#000000;letter-spacing:0.647px">Dependent employment</div>
<div class="t" style="left:1202.05px;top:1135.43px;font-size:22.66px;color:#000000;letter-spacing:-0.600px;transform:scaleX(0.9381);transform-origin:0.45px 0">TED</div>
<div class="t" style="left:49.89px;top:1169.83px;font-size:22.66px;color:#000000;letter-spacing:-0.600px;transform:scaleX(0.9461);transform-origin:1.81px 0">USA</div>
<div class="t" style="left:194.59px;top:1169.83px;font-size:22.66px;color:#000000;letter-spacing:0.536px">United States</div>
<div class="t" style="left:353.89px;top:1169.83px;font-size:22.66px;color:#000000;letter-spacing:1.200px;transform:scaleX(1.0735);transform-origin:1.81px 0">MW</div>
<div class="t" style="left:459.10px;top:1169.83px;font-size:22.66px;color:#000000;letter-spacing:0.524px">All persons</div>
<div class="t" style="left:594.87px;top:1169.83px;font-size:22.66px;color:#000000;letter-spacing:0.831px">900000</div>
<div class="t" style="left:684.85px;top:1169.83px;font-size:22.66px;color:#000000;letter-spacing:0.800px">Total</div>
<div class="t" style="left:779.49px;top:1169.83px;font-size:22.66px;color:#000000;letter-spacing:-0.600px;transform:scaleX(0.9262);transform-origin:1.81px 0">DE</div>
<div class="t" style="left:919.09px;top:1169.83px;font-size:22.66px;color:#000000;letter-spacing:0.647px">Dependent employment</div>
<div class="t" style="left:1202.05px;top:1169.83px;font-size:22.66px;color:#000000;letter-spacing:-0.600px;transform:scaleX(0.9381);transform-origin:0.45px 0">TED</div>
<div class="t" style="left:49.89px;top:1204.23px;font-size:22.66px;color:#000000;letter-spacing:-0.600px;transform:scaleX(0.9461);transform-origin:1.81px 0">USA</div>
<div class="t" style="left:194.59px;top:1204.23px;font-size:22.66px;color:#000000;letter-spacing:0.536px">United States</div>
<div class="t" style="left:353.89px;top:1204.23px;font-size:22.66px;color:#000000;letter-spacing:1.200px;transform:scaleX(1.0735);transform-origin:1.81px 0">MW</div>
<div class="t" style="left:459.10px;top:1204.23px;font-size:22.66px;color:#000000;letter-spacing:0.524px">All persons</div>
<div class="t" style="left:594.87px;top:1204.23px;font-size:22.66px;color:#000000;letter-spacing:0.831px">900000</div>
<div class="t" style="left:684.85px;top:1204.23px;font-size:22.66px;color:#000000;letter-spacing:0.800px">Total</div>
<div class="t" style="left:779.49px;top:1204.23px;font-size:22.66px;color:#000000;letter-spacing:-0.600px;transform:scaleX(0.9262);transform-origin:1.81px 0">DE</div>
<div class="t" style="left:919.09px;top:1204.23px;font-size:22.66px;color:#000000;letter-spacing:0.647px">Dependent employment</div>
<div class="t" style="left:1202.05px;top:1204.23px;font-size:22.66px;color:#000000;letter-spacing:-0.600px;transform:scaleX(0.9381);transform-origin:0.45px 0">TED</div>
<div class="t" style="left:49.89px;top:1238.63px;font-size:22.66px;color:#000000;letter-spacing:-0.600px;transform:scaleX(0.9461);transform-origin:1.81px 0">USA</div>
<div class="t" style="left:194.59px;top:1238.63px;font-size:22.66px;color:#000000;letter-spacing:0.536px">United States</div>
<div class="t" style="left:353.89px;top:1238.63px;font-size:22.66px;color:#000000;letter-spacing:1.200px;transform:scaleX(1.0735);transform-origin:1.81px 0">MW</div>
<div class="t" style="left:459.10px;top:1238.63px;font-size:22.66px;color:#000000;letter-spacing:0.524px">All persons</div>
<div class="t" style="left:594.87px;top:1238.63px;font-size:22.66px;color:#000000;letter-spacing:0.831px">900000</div>
<div class="t" style="left:684.85px;top:1238.63px;font-size:22.66px;color:#000000;letter-spacing:0.800px">Total</div>
<div class="t" style="left:779.49px;top:1238.63px;font-size:22.66px;color:#000000;letter-spacing:-0.600px;transform:scaleX(0.9262);transform-origin:1.81px 0">DE</div>
<div class="t" style="left:919.09px;top:1238.63px;font-size:22.66px;color:#000000;letter-spacing:0.647px">Dependent employment</div>
<div class="t" style="left:1202.05px;top:1238.63px;font-size:22.66px;color:#000000;letter-spacing:-0.600px;transform:scaleX(0.9381);transform-origin:0.45px 0">TED</div>
<div class="t" style="left:49.89px;top:1273.03px;font-size:22.66px;color:#000000;letter-spacing:-0.600px;transform:scaleX(0.9461);transform-origin:1.81px 0">USA</div>
<div class="t" style="left:194.59px;top:1273.03px;font-size:22.66px;color:#000000;letter-spacing:0.536px">United States</div>
<div class="t" style="left:353.89px;top:1273.03px;font-size:22.66px;color:#000000;letter-spacing:1.200px;transform:scaleX(1.0735);transform-origin:1.81px 0">MW</div>
<div class="t" style="left:459.10px;top:1273.03px;font-size:22.66px;color:#000000;letter-spacing:0.524px">All persons</div>
<div class="t" style="left:594.87px;top:1273.03px;font-size:22.66px;color:#000000;letter-spacing:0.831px">900000</div>
<div class="t" style="left:684.85px;top:1273.03px;font-size:22.66px;color:#000000;letter-spacing:0.800px">Total</div>
<div class="t" style="left:779.49px;top:1273.03px;font-size:22.66px;color:#000000;letter-spacing:-0.600px;transform:scaleX(0.9262);transform-origin:1.81px 0">DE</div>
<div class="t" style="left:919.09px;top:1273.03px;font-size:22.66px;color:#000000;letter-spacing:0.647px">Dependent employment</div>
<div class="t" style="left:1202.05px;top:1273.03px;font-size:22.66px;color:#000000;letter-spacing:-0.600px;transform:scaleX(0.9381);transform-origin:0.45px 0">TED</div>
<div class="t" style="left:49.89px;top:1307.43px;font-size:22.66px;color:#000000;letter-spacing:-0.600px;transform:scaleX(0.9461);transform-origin:1.81px 0">USA</div>
<div class="t" style="left:194.59px;top:1307.43px;font-size:22.66px;color:#000000;letter-spacing:0.536px">United States</div>
<div class="t" style="left:353.89px;top:1307.43px;font-size:22.66px;color:#000000;letter-spacing:1.200px;transform:scaleX(1.0735);transform-origin:1.81px 0">MW</div>
<div class="t" style="left:459.10px;top:1307.43px;font-size:22.66px;color:#000000;letter-spacing:0.524px">All persons</div>
<div class="t" style="left:594.87px;top:1307.43px;font-size:22.66px;color:#000000;letter-spacing:0.831px">900000</div>
<div class="t" style="left:684.85px;top:1307.43px;font-size:22.66px;color:#000000;letter-spacing:0.800px">Total</div>
<div class="t" style="left:779.49px;top:1307.43px;font-size:22.66px;color:#000000;letter-spacing:-0.600px;transform:scaleX(0.9262);transform-origin:1.81px 0">DE</div>
<div class="t" style="left:919.09px;top:1307.43px;font-size:22.66px;color:#000000;letter-spacing:0.647px">Dependent employment</div>
<div class="t" style="left:1202.05px;top:1307.43px;font-size:22.66px;color:#000000;letter-spacing:-0.600px;transform:scaleX(0.9381);transform-origin:0.45px 0">TED</div>
<div class="t" style="left:49.89px;top:1341.83px;font-size:22.66px;color:#000000;letter-spacing:-0.600px;transform:scaleX(0.9461);transform-origin:1.81px 0">USA</div>
<div class="t" style="left:194.59px;top:1341.83px;font-size:22.66px;color:#000000;letter-spacing:0.536px">United States</div>
<div class="t" style="left:353.89px;top:1341.83px;font-size:22.66px;color:#000000;letter-spacing:1.200px;transform:scaleX(1.0735);transform-origin:1.81px 0">MW</div>
<div class="t" style="left:459.10px;top:1341.83px;font-size:22.66px;color:#000000;letter-spacing:0.524px">All persons</div>
<div class="t" style="left:594.87px;top:1341.83px;font-size:22.66px;color:#000000;letter-spacing:0.831px">900000</div>
<div class="t" style="left:684.85px;top:1341.83px;font-size:22.66px;color:#000000;letter-spacing:0.800px">Total</div>
<div class="t" style="left:779.49px;top:1341.83px;font-size:22.66px;color:#000000;letter-spacing:-0.600px;transform:scaleX(0.9262);transform-origin:1.81px 0">DE</div>
<div class="t" style="left:919.09px;top:1341.83px;font-size:22.66px;color:#000000;letter-spacing:0.647px">Dependent employment</div>
<div class="t" style="left:1202.05px;top:1341.83px;font-size:22.66px;color:#000000;letter-spacing:-0.600px;transform:scaleX(0.9381);transform-origin:0.45px 0">TED</div>
<div class="t" style="left:49.89px;top:1376.23px;font-size:22.66px;color:#000000;letter-spacing:-0.600px;transform:scaleX(0.9461);transform-origin:1.81px 0">USA</div>
<div class="t" style="left:194.59px;top:1376.23px;font-size:22.66px;color:#000000;letter-spacing:0.536px">United States</div>
<div class="t" style="left:353.89px;top:1376.23px;font-size:22.66px;color:#000000;letter-spacing:1.200px;transform:scaleX(1.0735);transform-origin:1.81px 0">MW</div>
<div class="t" style="left:459.10px;top:1376.23px;font-size:22.66px;color:#000000;letter-spacing:0.524px">All persons</div>
<div class="t" style="left:594.87px;top:1376.23px;font-size:22.66px;color:#000000;letter-spacing:0.831px">900000</div>
<div class="t" style="left:684.85px;top:1376.23px;font-size:22.66px;color:#000000;letter-spacing:0.800px">Total</div>
<div class="t" style="left:779.49px;top:1376.23px;font-size:22.66px;color:#000000;letter-spacing:-0.600px;transform:scaleX(0.9262);transform-origin:1.81px 0">DE</div>
<div class="t" style="left:919.09px;top:1376.23px;font-size:22.66px;color:#000000;letter-spacing:0.647px">Dependent employment</div>
<div class="t" style="left:1202.05px;top:1376.23px;font-size:22.66px;color:#000000;letter-spacing:-0.600px;transform:scaleX(0.9381);transform-origin:0.45px 0">TED</div>
<div class="a" style="left:44.5px;top:437px;width:149.4px;height:39.3px;border:3.5px solid #237a43"></div>
<div class="a" style="left:48px;top:440.5px;width:142.4px;height:32.3px;border:1.5px solid #fff;border-left-width:1px"></div>
<div class="a" style="left:185.6px;top:468.6px;width:10.9px;height:10.9px;background:#fff"></div>
<div class="a" style="left:187.1px;top:470.1px;width:7.9px;height:7.9px;background:#237a43"></div>
</body></html>
